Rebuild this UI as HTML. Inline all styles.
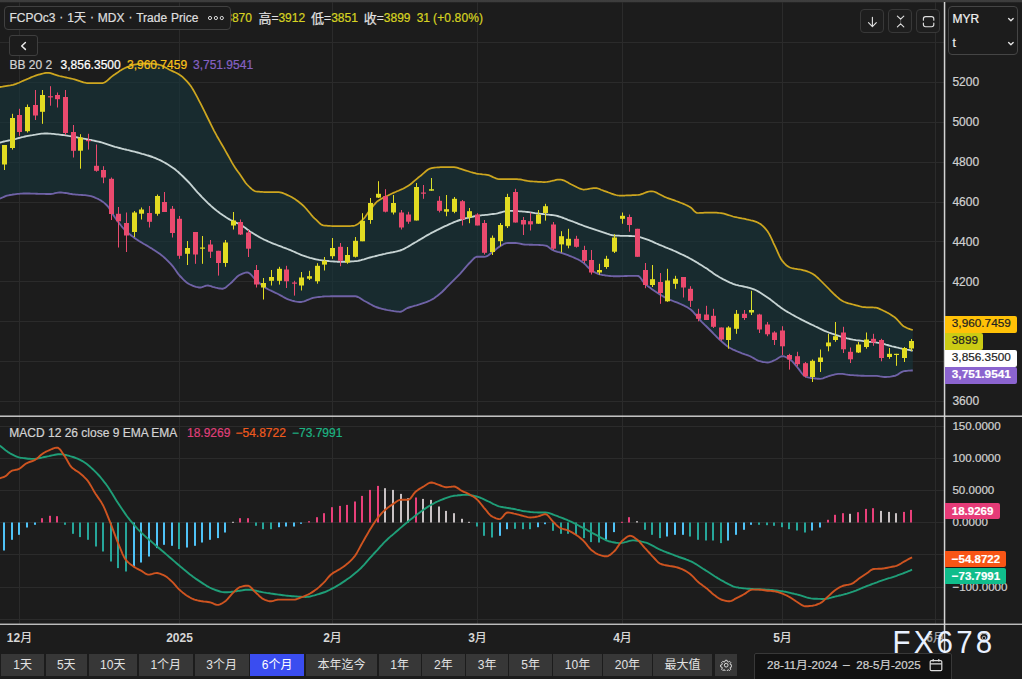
<!DOCTYPE html>
<html><head><meta charset="utf-8"><title>FCPOc3</title>
<style>
html,body{margin:0;padding:0;background:#1c1c1c;}
body{width:1022px;height:679px;position:relative;overflow:hidden;font-family:"Liberation Sans","Noto Sans CJK SC",sans-serif;font-size:12px;color:#d6d6d6;}
.t{-webkit-text-stroke:0.22px currentColor;position:absolute;white-space:nowrap;line-height:20px;height:20px;}
.b{font-weight:bold}
.box{position:absolute;box-sizing:border-box;border:1px solid #414141;border-radius:4px;background:#1c1c1c;}
.lab{-webkit-text-stroke:0.2px currentColor;position:absolute;left:945px;height:16.5px;line-height:16.5px;box-sizing:border-box;padding-left:6.8px;border-radius:0 2px 2px 0;white-space:nowrap;font-size:12px;}
.btn{position:absolute;top:653.6px;height:22.2px;line-height:22px;background:#373737;color:#e2e2e2;text-align:center;font-size:12px;white-space:nowrap;}
</style></head><body>
<div style="position:absolute;left:0;top:0;width:1022px;height:3px;background:linear-gradient(#3e3e3e 0,#3d3d3d 52%,#272727 78%,#1c1c1c 100%)"></div>

<svg width="1022" height="679" viewBox="0 0 1022 679" style="position:absolute;left:0;top:0">
<rect x="0" y="42" width="944" height="1" fill="#2b2b2b"/>
<rect x="0" y="82" width="944" height="1" fill="#2b2b2b"/>
<rect x="0" y="122" width="944" height="1" fill="#2b2b2b"/>
<rect x="0" y="162" width="944" height="1" fill="#2b2b2b"/>
<rect x="0" y="202" width="944" height="1" fill="#2b2b2b"/>
<rect x="0" y="241" width="944" height="1" fill="#2b2b2b"/>
<rect x="0" y="281" width="944" height="1" fill="#2b2b2b"/>
<rect x="0" y="321" width="944" height="1" fill="#2b2b2b"/>
<rect x="0" y="361" width="944" height="1" fill="#2b2b2b"/>
<rect x="0" y="401" width="944" height="1" fill="#2b2b2b"/>
<rect x="0" y="426" width="944" height="1" fill="#2b2b2b"/>
<rect x="0" y="458" width="944" height="1" fill="#2b2b2b"/>
<rect x="0" y="490" width="944" height="1" fill="#2b2b2b"/>
<rect x="0" y="522" width="944" height="1" fill="#2b2b2b"/>
<rect x="0" y="554" width="944" height="1" fill="#2b2b2b"/>
<rect x="0" y="587" width="944" height="1" fill="#2b2b2b"/>
<rect x="0" y="619" width="944" height="1" fill="#2b2b2b"/>
<rect x="19" y="2" width="1" height="622" fill="#2b2b2b"/>
<rect x="179" y="2" width="1" height="622" fill="#2b2b2b"/>
<rect x="332" y="2" width="1" height="622" fill="#2b2b2b"/>
<rect x="477" y="2" width="1" height="622" fill="#2b2b2b"/>
<rect x="622" y="2" width="1" height="622" fill="#2b2b2b"/>
<rect x="782" y="2" width="1" height="622" fill="#2b2b2b"/>
<rect x="935" y="2" width="1" height="622" fill="#2b2b2b"/>
<path d="M-2.0,87.5 L-0.5,87.1 L1.0,86.8 L2.5,86.6 L4.0,86.3 L5.5,86.1 L7.0,85.9 L8.5,85.7 L10.0,85.5 L11.5,85.2 L13.0,84.9 L14.5,84.4 L16.0,83.9 L17.5,83.3 L19.0,82.7 L20.5,82.0 L22.0,81.3 L23.5,80.6 L25.0,80.0 L26.5,79.4 L28.0,78.7 L29.5,78.1 L31.0,77.4 L32.5,76.8 L34.0,76.2 L35.5,75.6 L37.0,75.1 L38.5,74.7 L40.0,74.3 L41.5,73.9 L43.0,73.5 L44.5,73.2 L46.0,72.9 L47.5,72.8 L49.0,72.9 L50.5,73.1 L52.0,73.6 L53.5,74.1 L55.0,74.7 L56.5,75.2 L58.0,75.6 L59.5,76.0 L61.0,76.3 L62.5,76.7 L64.0,77.0 L65.5,77.3 L67.0,77.7 L68.5,78.0 L70.0,78.3 L71.5,78.7 L73.0,79.0 L74.5,79.4 L76.0,79.8 L77.5,80.3 L79.0,80.8 L80.5,81.4 L82.0,81.9 L83.5,82.4 L85.0,82.7 L86.5,83.0 L88.0,83.0 L89.5,83.0 L91.0,83.0 L92.5,83.0 L94.0,83.0 L95.5,83.0 L97.0,83.0 L98.5,83.0 L100.0,83.0 L101.5,83.0 L103.0,83.0 L104.5,82.5 L106.0,81.6 L107.5,80.3 L109.0,79.0 L110.5,77.6 L112.0,76.4 L113.5,75.3 L115.0,74.3 L116.5,73.2 L118.0,72.2 L119.5,71.1 L121.0,70.2 L122.5,69.3 L124.0,68.5 L125.5,67.8 L127.0,67.1 L128.5,66.5 L130.0,65.9 L131.5,65.4 L133.0,64.9 L134.5,64.6 L136.0,64.3 L137.5,64.1 L139.0,63.9 L140.5,63.7 L142.0,63.6 L143.5,63.4 L145.0,63.3 L146.5,63.3 L148.0,63.3 L149.5,63.4 L151.0,63.5 L152.5,63.7 L154.0,63.9 L155.5,64.1 L157.0,64.4 L158.5,64.7 L160.0,65.0 L161.5,65.4 L163.0,66.1 L164.5,66.9 L166.0,67.7 L167.5,68.6 L169.0,69.5 L170.5,70.2 L172.0,70.9 L173.5,71.6 L175.0,72.3 L176.5,73.0 L178.0,73.8 L179.5,74.7 L181.0,75.7 L182.5,76.9 L184.0,78.3 L185.5,79.8 L187.0,81.4 L188.5,83.1 L190.0,85.0 L191.5,87.1 L193.0,89.5 L194.5,92.1 L196.0,94.9 L197.5,97.7 L199.0,100.6 L200.5,103.4 L202.0,106.4 L203.5,109.4 L205.0,112.4 L206.5,115.5 L208.0,118.5 L209.5,121.5 L211.0,124.6 L212.5,127.6 L214.0,130.6 L215.5,133.4 L217.0,136.2 L218.5,138.8 L220.0,141.4 L221.5,144.0 L223.0,146.5 L224.5,149.1 L226.0,151.8 L227.5,154.5 L229.0,157.2 L230.5,159.9 L232.0,162.6 L233.5,165.1 L235.0,167.5 L236.5,169.7 L238.0,171.8 L239.5,173.8 L241.0,175.9 L242.5,178.2 L244.0,180.5 L245.5,182.7 L247.0,184.5 L248.5,186.0 L250.0,187.5 L251.5,188.9 L253.0,190.1 L254.5,191.0 L256.0,191.5 L257.5,191.6 L259.0,191.7 L260.5,191.8 L262.0,191.9 L263.5,192.0 L265.0,192.0 L266.5,192.0 L268.0,192.0 L269.5,192.0 L271.0,192.0 L272.5,192.0 L274.0,192.0 L275.5,192.0 L277.0,192.0 L278.5,192.0 L280.0,192.3 L281.5,192.6 L283.0,193.1 L284.5,193.7 L286.0,194.4 L287.5,195.1 L289.0,195.8 L290.5,196.5 L292.0,197.3 L293.5,198.2 L295.0,199.1 L296.5,200.2 L298.0,201.3 L299.5,202.5 L301.0,203.7 L302.5,205.0 L304.0,206.4 L305.5,208.0 L307.0,209.7 L308.5,211.5 L310.0,213.3 L311.5,215.1 L313.0,216.8 L314.5,218.3 L316.0,219.7 L317.5,221.2 L319.0,222.7 L320.5,224.0 L322.0,224.9 L323.5,225.5 L325.0,225.6 L326.5,225.7 L328.0,225.8 L329.5,225.9 L331.0,226.0 L332.5,226.1 L334.0,226.2 L335.5,226.2 L337.0,226.2 L338.5,226.2 L340.0,226.2 L341.5,226.2 L343.0,226.2 L344.5,226.2 L346.0,226.2 L347.5,226.1 L349.0,226.0 L350.5,226.0 L352.0,225.9 L353.5,225.8 L355.0,225.5 L356.5,224.8 L358.0,223.9 L359.5,222.7 L361.0,221.3 L362.5,220.0 L364.0,218.4 L365.5,216.4 L367.0,214.2 L368.5,212.0 L370.0,210.0 L371.5,208.1 L373.0,206.1 L374.5,204.3 L376.0,202.6 L377.5,201.2 L379.0,200.2 L380.5,199.2 L382.0,198.4 L383.5,197.6 L385.0,196.9 L386.5,196.2 L388.0,195.5 L389.5,194.7 L391.0,194.0 L392.5,193.3 L394.0,192.6 L395.5,192.0 L397.0,191.3 L398.5,190.7 L400.0,190.0 L401.5,189.4 L403.0,188.7 L404.5,187.9 L406.0,187.1 L407.5,186.2 L409.0,185.3 L410.5,184.2 L412.0,183.0 L413.5,181.7 L415.0,180.4 L416.5,179.1 L418.0,177.8 L419.5,176.6 L421.0,175.5 L422.5,174.2 L424.0,172.8 L425.5,171.5 L427.0,170.3 L428.5,169.3 L430.0,168.6 L431.5,168.2 L433.0,167.9 L434.5,167.7 L436.0,167.5 L437.5,167.4 L439.0,167.3 L440.5,167.2 L442.0,167.2 L443.5,167.1 L445.0,167.1 L446.5,167.1 L448.0,167.0 L449.5,167.0 L451.0,167.0 L452.5,167.0 L454.0,167.1 L455.5,167.3 L457.0,167.7 L458.5,168.1 L460.0,168.7 L461.5,169.2 L463.0,169.7 L464.5,170.2 L466.0,170.6 L467.5,171.0 L469.0,171.5 L470.5,172.0 L472.0,172.4 L473.5,172.8 L475.0,173.2 L476.5,173.6 L478.0,173.8 L479.5,174.0 L481.0,174.2 L482.5,174.4 L484.0,174.5 L485.5,174.7 L487.0,174.9 L488.5,175.2 L490.0,175.7 L491.5,176.4 L493.0,177.1 L494.5,177.7 L496.0,178.4 L497.5,178.9 L499.0,179.2 L500.5,179.2 L502.0,179.2 L503.5,179.2 L505.0,179.2 L506.5,179.2 L508.0,179.2 L509.5,179.2 L511.0,179.2 L512.5,179.2 L514.0,179.2 L515.5,179.2 L517.0,179.2 L518.5,179.3 L520.0,179.4 L521.5,179.7 L523.0,180.0 L524.5,180.3 L526.0,180.6 L527.5,180.9 L529.0,181.1 L530.5,181.3 L532.0,181.4 L533.5,181.5 L535.0,181.6 L536.5,181.7 L538.0,181.8 L539.5,181.9 L541.0,181.9 L542.5,182.0 L544.0,182.0 L545.5,182.0 L547.0,181.9 L548.5,181.7 L550.0,181.4 L551.5,181.0 L553.0,180.6 L554.5,180.3 L556.0,179.9 L557.5,179.7 L559.0,179.5 L560.5,179.5 L562.0,179.8 L563.5,180.3 L565.0,180.9 L566.5,181.7 L568.0,182.6 L569.5,183.5 L571.0,184.3 L572.5,185.0 L574.0,185.7 L575.5,186.5 L577.0,187.3 L578.5,188.0 L580.0,188.7 L581.5,189.2 L583.0,189.5 L584.5,189.5 L586.0,189.3 L587.5,189.1 L589.0,188.8 L590.5,188.5 L592.0,188.3 L593.5,188.1 L595.0,188.0 L596.5,188.1 L598.0,188.5 L599.5,189.0 L601.0,189.7 L602.5,190.3 L604.0,190.9 L605.5,191.4 L607.0,191.9 L608.5,192.5 L610.0,193.0 L611.5,193.6 L613.0,194.1 L614.5,194.6 L616.0,195.0 L617.5,195.3 L619.0,195.5 L620.5,195.5 L622.0,195.5 L623.5,195.5 L625.0,195.5 L626.5,195.4 L628.0,195.4 L629.5,195.3 L631.0,195.3 L632.5,195.2 L634.0,195.2 L635.5,195.1 L637.0,195.0 L638.5,194.9 L640.0,194.6 L641.5,194.1 L643.0,193.6 L644.5,193.0 L646.0,192.4 L647.5,191.9 L649.0,191.5 L650.5,191.3 L652.0,191.3 L653.5,191.5 L655.0,192.0 L656.5,192.6 L658.0,193.4 L659.5,194.2 L661.0,195.0 L662.5,195.8 L664.0,196.6 L665.5,197.2 L667.0,197.8 L668.5,198.3 L670.0,198.8 L671.5,199.4 L673.0,199.9 L674.5,200.4 L676.0,201.0 L677.5,201.5 L679.0,202.1 L680.5,202.7 L682.0,203.3 L683.5,203.9 L685.0,204.5 L686.5,205.2 L688.0,205.9 L689.5,206.7 L691.0,207.7 L692.5,209.2 L694.0,210.8 L695.5,212.2 L697.0,212.9 L698.5,213.0 L700.0,212.9 L701.5,212.9 L703.0,212.8 L704.5,212.7 L706.0,212.6 L707.5,212.6 L709.0,212.5 L710.5,212.5 L712.0,212.5 L713.5,212.6 L715.0,212.6 L716.5,212.7 L718.0,212.8 L719.5,213.0 L721.0,213.1 L722.5,213.4 L724.0,213.7 L725.5,214.1 L727.0,214.6 L728.5,215.1 L730.0,215.5 L731.5,216.0 L733.0,216.5 L734.5,216.9 L736.0,217.2 L737.5,217.5 L739.0,217.8 L740.5,218.1 L742.0,218.4 L743.5,218.6 L745.0,218.9 L746.5,219.3 L748.0,219.6 L749.5,220.0 L751.0,220.4 L752.5,220.7 L754.0,221.2 L755.5,221.7 L757.0,222.2 L758.5,222.9 L760.0,223.7 L761.5,224.8 L763.0,226.1 L764.5,227.7 L766.0,229.4 L767.5,231.2 L769.0,233.6 L770.5,236.5 L772.0,239.7 L773.5,243.1 L775.0,246.2 L776.5,249.4 L778.0,252.8 L779.5,256.1 L781.0,259.0 L782.5,261.2 L784.0,262.9 L785.5,264.5 L787.0,265.8 L788.5,266.8 L790.0,267.5 L791.5,268.0 L793.0,268.3 L794.5,268.6 L796.0,268.8 L797.5,269.1 L799.0,269.3 L800.5,269.5 L802.0,269.9 L803.5,270.3 L805.0,270.7 L806.5,271.2 L808.0,271.7 L809.5,272.3 L811.0,273.0 L812.5,273.8 L814.0,274.7 L815.5,275.8 L817.0,277.1 L818.5,278.5 L820.0,280.0 L821.5,281.5 L823.0,283.0 L824.5,284.5 L826.0,286.0 L827.5,287.5 L829.0,289.0 L830.5,290.6 L832.0,292.1 L833.5,293.6 L835.0,295.0 L836.5,296.4 L838.0,297.7 L839.5,299.0 L841.0,300.1 L842.5,301.0 L844.0,301.7 L845.5,302.3 L847.0,302.8 L848.5,303.3 L850.0,303.7 L851.5,304.1 L853.0,304.5 L854.5,304.9 L856.0,305.3 L857.5,305.7 L859.0,306.1 L860.5,306.5 L862.0,306.9 L863.5,307.1 L865.0,307.2 L866.5,307.3 L868.0,307.3 L869.5,307.4 L871.0,307.4 L872.5,307.4 L874.0,307.5 L875.5,307.5 L877.0,307.9 L878.5,308.4 L880.0,309.1 L881.5,309.8 L883.0,310.5 L884.5,311.2 L886.0,311.9 L887.5,312.7 L889.0,313.6 L890.5,314.4 L892.0,315.4 L893.5,316.4 L895.0,317.5 L896.5,318.8 L898.0,320.5 L899.5,322.2 L901.0,323.9 L902.5,325.4 L904.0,326.4 L905.5,327.2 L907.0,328.0 L908.5,328.7 L910.0,329.2 L911.5,329.6 L912.8,329.8 L912.8,370.5 L911.5,370.5 L910.0,370.6 L908.5,370.7 L907.0,370.8 L905.5,371.0 L904.0,371.2 L902.5,371.6 L901.0,372.4 L899.5,373.3 L898.0,374.4 L896.5,375.2 L895.0,375.8 L893.5,376.0 L892.0,376.3 L890.5,376.6 L889.0,376.8 L887.5,376.9 L886.0,377.0 L884.5,377.0 L883.0,376.9 L881.5,376.6 L880.0,376.4 L878.5,376.1 L877.0,375.9 L875.5,375.8 L874.0,375.8 L872.5,375.8 L871.0,375.8 L869.5,375.8 L868.0,375.8 L866.5,375.8 L865.0,375.8 L863.5,375.7 L862.0,375.7 L860.5,375.7 L859.0,375.6 L857.5,375.5 L856.0,375.4 L854.5,375.3 L853.0,375.2 L851.5,375.1 L850.0,375.0 L848.5,374.8 L847.0,374.6 L845.5,374.4 L844.0,374.1 L842.5,373.9 L841.0,373.8 L839.5,373.8 L838.0,373.9 L836.5,374.1 L835.0,374.4 L833.5,374.8 L832.0,375.2 L830.5,375.6 L829.0,376.0 L827.5,376.6 L826.0,377.2 L824.5,377.7 L823.0,378.3 L821.5,378.6 L820.0,378.8 L818.5,378.7 L817.0,378.7 L815.5,378.5 L814.0,378.4 L812.5,378.2 L811.0,378.0 L809.5,377.7 L808.0,377.3 L806.5,376.8 L805.0,376.2 L803.5,375.2 L802.0,373.5 L800.5,371.5 L799.0,369.4 L797.5,367.5 L796.0,365.7 L794.5,363.9 L793.0,362.2 L791.5,360.7 L790.0,359.5 L788.5,358.6 L787.0,357.7 L785.5,357.0 L784.0,356.4 L782.5,356.2 L781.0,356.5 L779.5,357.3 L778.0,358.2 L776.5,359.2 L775.0,360.0 L773.5,360.6 L772.0,361.3 L770.5,361.9 L769.0,362.3 L767.5,362.5 L766.0,362.4 L764.5,362.2 L763.0,362.0 L761.5,361.6 L760.0,361.2 L758.5,360.8 L757.0,360.1 L755.5,359.3 L754.0,358.4 L752.5,357.5 L751.0,356.7 L749.5,356.0 L748.0,355.4 L746.5,354.9 L745.0,354.4 L743.5,353.8 L742.0,353.3 L740.5,352.7 L739.0,352.1 L737.5,351.5 L736.0,350.9 L734.5,350.2 L733.0,349.6 L731.5,348.8 L730.0,348.0 L728.5,347.1 L727.0,346.0 L725.5,344.8 L724.0,343.5 L722.5,342.2 L721.0,340.9 L719.5,339.6 L718.0,338.1 L716.5,336.7 L715.0,335.1 L713.5,333.6 L712.0,332.0 L710.5,330.5 L709.0,329.0 L707.5,327.5 L706.0,326.0 L704.5,324.6 L703.0,323.1 L701.5,321.6 L700.0,320.0 L698.5,318.3 L697.0,316.5 L695.5,314.7 L694.0,312.9 L692.5,311.2 L691.0,309.8 L689.5,308.7 L688.0,307.7 L686.5,306.8 L685.0,306.1 L683.5,305.3 L682.0,304.7 L680.5,304.0 L679.0,303.3 L677.5,302.7 L676.0,302.1 L674.5,301.6 L673.0,301.0 L671.5,300.4 L670.0,299.9 L668.5,299.2 L667.0,298.5 L665.5,297.7 L664.0,296.9 L662.5,296.0 L661.0,295.1 L659.5,294.2 L658.0,293.2 L656.5,292.2 L655.0,291.2 L653.5,290.2 L652.0,289.2 L650.5,288.1 L649.0,287.0 L647.5,285.9 L646.0,284.6 L644.5,283.3 L643.0,281.4 L641.5,279.3 L640.0,277.3 L638.5,276.0 L637.0,275.8 L635.5,275.8 L634.0,275.8 L632.5,275.8 L631.0,275.9 L629.5,275.9 L628.0,275.9 L626.5,276.0 L625.0,276.0 L623.5,276.1 L622.0,276.1 L620.5,276.2 L619.0,276.2 L617.5,276.2 L616.0,276.2 L614.5,276.2 L613.0,276.2 L611.5,276.1 L610.0,276.0 L608.5,275.9 L607.0,275.7 L605.5,275.5 L604.0,275.2 L602.5,275.0 L601.0,274.7 L599.5,274.4 L598.0,273.9 L596.5,273.2 L595.0,272.4 L593.5,271.4 L592.0,270.4 L590.5,269.4 L589.0,268.2 L587.5,266.8 L586.0,265.2 L584.5,263.7 L583.0,262.4 L581.5,261.4 L580.0,260.5 L578.5,259.7 L577.0,259.0 L575.5,258.3 L574.0,257.6 L572.5,257.0 L571.0,256.4 L569.5,255.8 L568.0,255.2 L566.5,254.7 L565.0,254.1 L563.5,253.6 L562.0,253.1 L560.5,252.6 L559.0,252.2 L557.5,251.8 L556.0,251.3 L554.5,250.8 L553.0,250.2 L551.5,249.4 L550.0,248.2 L548.5,247.0 L547.0,246.0 L545.5,245.6 L544.0,245.4 L542.5,245.2 L541.0,245.1 L539.5,245.0 L538.0,244.9 L536.5,244.9 L535.0,244.8 L533.5,244.8 L532.0,244.7 L530.5,244.7 L529.0,244.7 L527.5,244.6 L526.0,244.6 L524.5,244.5 L523.0,244.3 L521.5,244.0 L520.0,243.7 L518.5,243.4 L517.0,243.1 L515.5,243.0 L514.0,243.0 L512.5,243.0 L511.0,243.0 L509.5,243.0 L508.0,243.0 L506.5,243.1 L505.0,243.5 L503.5,244.2 L502.0,245.1 L500.5,246.0 L499.0,246.9 L497.5,248.0 L496.0,249.2 L494.5,250.5 L493.0,251.6 L491.5,252.8 L490.0,254.0 L488.5,255.2 L487.0,256.2 L485.5,256.7 L484.0,256.8 L482.5,256.8 L481.0,256.8 L479.5,256.8 L478.0,256.8 L476.5,256.8 L475.0,257.5 L473.5,258.8 L472.0,260.4 L470.5,262.0 L469.0,263.5 L467.5,265.1 L466.0,266.8 L464.5,268.6 L463.0,270.4 L461.5,272.1 L460.0,273.8 L458.5,275.3 L457.0,276.8 L455.5,278.3 L454.0,279.8 L452.5,281.3 L451.0,282.8 L449.5,284.3 L448.0,285.8 L446.5,287.4 L445.0,289.0 L443.5,290.5 L442.0,292.0 L440.5,293.3 L439.0,294.5 L437.5,295.7 L436.0,296.8 L434.5,297.9 L433.0,298.9 L431.5,299.7 L430.0,300.5 L428.5,301.2 L427.0,301.8 L425.5,302.4 L424.0,302.9 L422.5,303.4 L421.0,303.9 L419.5,304.4 L418.0,304.8 L416.5,305.3 L415.0,305.7 L413.5,306.2 L412.0,306.6 L410.5,307.0 L409.0,307.5 L407.5,308.0 L406.0,308.8 L404.5,309.7 L403.0,310.7 L401.5,311.5 L400.0,311.8 L398.5,311.7 L397.0,311.6 L395.5,311.4 L394.0,311.2 L392.5,310.9 L391.0,310.7 L389.5,310.4 L388.0,310.2 L386.5,309.9 L385.0,309.5 L383.5,309.2 L382.0,308.8 L380.5,308.4 L379.0,308.0 L377.5,307.5 L376.0,307.0 L374.5,306.3 L373.0,305.6 L371.5,304.8 L370.0,304.0 L368.5,303.1 L367.0,302.3 L365.5,301.5 L364.0,300.7 L362.5,299.8 L361.0,298.8 L359.5,297.8 L358.0,297.0 L356.5,296.5 L355.0,296.2 L353.5,296.2 L352.0,296.2 L350.5,296.2 L349.0,296.2 L347.5,296.2 L346.0,296.2 L344.5,296.2 L343.0,296.2 L341.5,296.2 L340.0,296.2 L338.5,296.2 L337.0,296.2 L335.5,296.2 L334.0,296.2 L332.5,296.2 L331.0,296.2 L329.5,296.3 L328.0,296.3 L326.5,296.3 L325.0,296.4 L323.5,296.5 L322.0,296.7 L320.5,296.8 L319.0,297.0 L317.5,297.2 L316.0,297.4 L314.5,297.6 L313.0,297.9 L311.5,298.4 L310.0,299.0 L308.5,299.6 L307.0,300.2 L305.5,300.8 L304.0,301.3 L302.5,301.7 L301.0,302.0 L299.5,302.0 L298.0,301.9 L296.5,301.7 L295.0,301.4 L293.5,301.0 L292.0,300.6 L290.5,300.1 L289.0,299.7 L287.5,299.1 L286.0,298.4 L284.5,297.6 L283.0,296.8 L281.5,295.9 L280.0,295.1 L278.5,294.3 L277.0,293.5 L275.5,292.8 L274.0,292.1 L272.5,291.4 L271.0,290.7 L269.5,290.0 L268.0,289.2 L266.5,288.4 L265.0,287.5 L263.5,286.5 L262.0,285.3 L260.5,284.0 L259.0,282.6 L257.5,281.2 L256.0,279.9 L254.5,278.5 L253.0,276.9 L251.5,275.2 L250.0,273.7 L248.5,272.7 L247.0,272.5 L245.5,272.7 L244.0,273.1 L242.5,273.7 L241.0,274.3 L239.5,275.0 L238.0,276.0 L236.5,277.3 L235.0,278.8 L233.5,280.4 L232.0,282.0 L230.5,283.4 L229.0,284.6 L227.5,285.9 L226.0,287.2 L224.5,288.2 L223.0,288.7 L221.5,288.7 L220.0,288.5 L218.5,288.3 L217.0,287.9 L215.5,287.6 L214.0,287.2 L212.5,286.8 L211.0,286.2 L209.5,285.8 L208.0,285.5 L206.5,285.6 L205.0,286.0 L203.5,286.6 L202.0,287.1 L200.5,287.5 L199.0,287.5 L197.5,287.2 L196.0,286.9 L194.5,286.4 L193.0,285.8 L191.5,285.2 L190.0,284.5 L188.5,283.7 L187.0,282.7 L185.5,281.5 L184.0,280.1 L182.5,278.6 L181.0,277.0 L179.5,275.5 L178.0,273.6 L176.5,271.5 L175.0,269.3 L173.5,267.2 L172.0,265.4 L170.5,263.7 L169.0,262.1 L167.5,260.6 L166.0,259.1 L164.5,257.7 L163.0,256.4 L161.5,255.2 L160.0,254.1 L158.5,253.0 L157.0,252.0 L155.5,251.0 L154.0,250.0 L152.5,249.1 L151.0,248.1 L149.5,247.2 L148.0,246.3 L146.5,245.4 L145.0,244.5 L143.5,243.7 L142.0,242.8 L140.5,241.9 L139.0,241.0 L137.5,240.0 L136.0,239.0 L134.5,237.9 L133.0,236.8 L131.5,235.7 L130.0,234.5 L128.5,233.2 L127.0,231.9 L125.5,230.5 L124.0,229.0 L122.5,227.3 L121.0,225.5 L119.5,223.6 L118.0,221.6 L116.5,219.6 L115.0,217.5 L113.5,215.2 L112.0,212.7 L110.5,210.2 L109.0,207.9 L107.5,206.0 L106.0,204.5 L104.5,203.1 L103.0,201.9 L101.5,200.9 L100.0,200.0 L98.5,199.2 L97.0,198.5 L95.5,197.9 L94.0,197.2 L92.5,196.7 L91.0,196.2 L89.5,195.9 L88.0,195.6 L86.5,195.4 L85.0,195.2 L83.5,195.1 L82.0,195.0 L80.5,194.9 L79.0,194.8 L77.5,194.7 L76.0,194.6 L74.5,194.4 L73.0,194.3 L71.5,194.0 L70.0,193.8 L68.5,193.5 L67.0,193.2 L65.5,193.0 L64.0,192.8 L62.5,192.6 L61.0,192.5 L59.5,192.5 L58.0,192.7 L56.5,192.9 L55.0,193.2 L53.5,193.6 L52.0,193.8 L50.5,194.0 L49.0,194.0 L47.5,194.0 L46.0,194.0 L44.5,193.9 L43.0,193.9 L41.5,193.9 L40.0,193.8 L38.5,193.8 L37.0,193.7 L35.5,193.7 L34.0,193.6 L32.5,193.6 L31.0,193.6 L29.5,193.5 L28.0,193.5 L26.5,193.5 L25.0,193.5 L23.5,193.5 L22.0,193.6 L20.5,193.7 L19.0,193.8 L17.5,193.9 L16.0,194.1 L14.5,194.3 L13.0,194.5 L11.5,194.8 L10.0,195.0 L8.5,195.3 L7.0,195.6 L5.5,196.1 L4.0,196.8 L2.5,197.5 L1.0,198.2 L-0.5,198.6 L-2.0,199.0Z" fill="#17353c" fill-opacity="0.62"/>
<path d="M-2.0,87.5 L-0.5,87.1 L1.0,86.8 L2.5,86.6 L4.0,86.3 L5.5,86.1 L7.0,85.9 L8.5,85.7 L10.0,85.5 L11.5,85.2 L13.0,84.9 L14.5,84.4 L16.0,83.9 L17.5,83.3 L19.0,82.7 L20.5,82.0 L22.0,81.3 L23.5,80.6 L25.0,80.0 L26.5,79.4 L28.0,78.7 L29.5,78.1 L31.0,77.4 L32.5,76.8 L34.0,76.2 L35.5,75.6 L37.0,75.1 L38.5,74.7 L40.0,74.3 L41.5,73.9 L43.0,73.5 L44.5,73.2 L46.0,72.9 L47.5,72.8 L49.0,72.9 L50.5,73.1 L52.0,73.6 L53.5,74.1 L55.0,74.7 L56.5,75.2 L58.0,75.6 L59.5,76.0 L61.0,76.3 L62.5,76.7 L64.0,77.0 L65.5,77.3 L67.0,77.7 L68.5,78.0 L70.0,78.3 L71.5,78.7 L73.0,79.0 L74.5,79.4 L76.0,79.8 L77.5,80.3 L79.0,80.8 L80.5,81.4 L82.0,81.9 L83.5,82.4 L85.0,82.7 L86.5,83.0 L88.0,83.0 L89.5,83.0 L91.0,83.0 L92.5,83.0 L94.0,83.0 L95.5,83.0 L97.0,83.0 L98.5,83.0 L100.0,83.0 L101.5,83.0 L103.0,83.0 L104.5,82.5 L106.0,81.6 L107.5,80.3 L109.0,79.0 L110.5,77.6 L112.0,76.4 L113.5,75.3 L115.0,74.3 L116.5,73.2 L118.0,72.2 L119.5,71.1 L121.0,70.2 L122.5,69.3 L124.0,68.5 L125.5,67.8 L127.0,67.1 L128.5,66.5 L130.0,65.9 L131.5,65.4 L133.0,64.9 L134.5,64.6 L136.0,64.3 L137.5,64.1 L139.0,63.9 L140.5,63.7 L142.0,63.6 L143.5,63.4 L145.0,63.3 L146.5,63.3 L148.0,63.3 L149.5,63.4 L151.0,63.5 L152.5,63.7 L154.0,63.9 L155.5,64.1 L157.0,64.4 L158.5,64.7 L160.0,65.0 L161.5,65.4 L163.0,66.1 L164.5,66.9 L166.0,67.7 L167.5,68.6 L169.0,69.5 L170.5,70.2 L172.0,70.9 L173.5,71.6 L175.0,72.3 L176.5,73.0 L178.0,73.8 L179.5,74.7 L181.0,75.7 L182.5,76.9 L184.0,78.3 L185.5,79.8 L187.0,81.4 L188.5,83.1 L190.0,85.0 L191.5,87.1 L193.0,89.5 L194.5,92.1 L196.0,94.9 L197.5,97.7 L199.0,100.6 L200.5,103.4 L202.0,106.4 L203.5,109.4 L205.0,112.4 L206.5,115.5 L208.0,118.5 L209.5,121.5 L211.0,124.6 L212.5,127.6 L214.0,130.6 L215.5,133.4 L217.0,136.2 L218.5,138.8 L220.0,141.4 L221.5,144.0 L223.0,146.5 L224.5,149.1 L226.0,151.8 L227.5,154.5 L229.0,157.2 L230.5,159.9 L232.0,162.6 L233.5,165.1 L235.0,167.5 L236.5,169.7 L238.0,171.8 L239.5,173.8 L241.0,175.9 L242.5,178.2 L244.0,180.5 L245.5,182.7 L247.0,184.5 L248.5,186.0 L250.0,187.5 L251.5,188.9 L253.0,190.1 L254.5,191.0 L256.0,191.5 L257.5,191.6 L259.0,191.7 L260.5,191.8 L262.0,191.9 L263.5,192.0 L265.0,192.0 L266.5,192.0 L268.0,192.0 L269.5,192.0 L271.0,192.0 L272.5,192.0 L274.0,192.0 L275.5,192.0 L277.0,192.0 L278.5,192.0 L280.0,192.3 L281.5,192.6 L283.0,193.1 L284.5,193.7 L286.0,194.4 L287.5,195.1 L289.0,195.8 L290.5,196.5 L292.0,197.3 L293.5,198.2 L295.0,199.1 L296.5,200.2 L298.0,201.3 L299.5,202.5 L301.0,203.7 L302.5,205.0 L304.0,206.4 L305.5,208.0 L307.0,209.7 L308.5,211.5 L310.0,213.3 L311.5,215.1 L313.0,216.8 L314.5,218.3 L316.0,219.7 L317.5,221.2 L319.0,222.7 L320.5,224.0 L322.0,224.9 L323.5,225.5 L325.0,225.6 L326.5,225.7 L328.0,225.8 L329.5,225.9 L331.0,226.0 L332.5,226.1 L334.0,226.2 L335.5,226.2 L337.0,226.2 L338.5,226.2 L340.0,226.2 L341.5,226.2 L343.0,226.2 L344.5,226.2 L346.0,226.2 L347.5,226.1 L349.0,226.0 L350.5,226.0 L352.0,225.9 L353.5,225.8 L355.0,225.5 L356.5,224.8 L358.0,223.9 L359.5,222.7 L361.0,221.3 L362.5,220.0 L364.0,218.4 L365.5,216.4 L367.0,214.2 L368.5,212.0 L370.0,210.0 L371.5,208.1 L373.0,206.1 L374.5,204.3 L376.0,202.6 L377.5,201.2 L379.0,200.2 L380.5,199.2 L382.0,198.4 L383.5,197.6 L385.0,196.9 L386.5,196.2 L388.0,195.5 L389.5,194.7 L391.0,194.0 L392.5,193.3 L394.0,192.6 L395.5,192.0 L397.0,191.3 L398.5,190.7 L400.0,190.0 L401.5,189.4 L403.0,188.7 L404.5,187.9 L406.0,187.1 L407.5,186.2 L409.0,185.3 L410.5,184.2 L412.0,183.0 L413.5,181.7 L415.0,180.4 L416.5,179.1 L418.0,177.8 L419.5,176.6 L421.0,175.5 L422.5,174.2 L424.0,172.8 L425.5,171.5 L427.0,170.3 L428.5,169.3 L430.0,168.6 L431.5,168.2 L433.0,167.9 L434.5,167.7 L436.0,167.5 L437.5,167.4 L439.0,167.3 L440.5,167.2 L442.0,167.2 L443.5,167.1 L445.0,167.1 L446.5,167.1 L448.0,167.0 L449.5,167.0 L451.0,167.0 L452.5,167.0 L454.0,167.1 L455.5,167.3 L457.0,167.7 L458.5,168.1 L460.0,168.7 L461.5,169.2 L463.0,169.7 L464.5,170.2 L466.0,170.6 L467.5,171.0 L469.0,171.5 L470.5,172.0 L472.0,172.4 L473.5,172.8 L475.0,173.2 L476.5,173.6 L478.0,173.8 L479.5,174.0 L481.0,174.2 L482.5,174.4 L484.0,174.5 L485.5,174.7 L487.0,174.9 L488.5,175.2 L490.0,175.7 L491.5,176.4 L493.0,177.1 L494.5,177.7 L496.0,178.4 L497.5,178.9 L499.0,179.2 L500.5,179.2 L502.0,179.2 L503.5,179.2 L505.0,179.2 L506.5,179.2 L508.0,179.2 L509.5,179.2 L511.0,179.2 L512.5,179.2 L514.0,179.2 L515.5,179.2 L517.0,179.2 L518.5,179.3 L520.0,179.4 L521.5,179.7 L523.0,180.0 L524.5,180.3 L526.0,180.6 L527.5,180.9 L529.0,181.1 L530.5,181.3 L532.0,181.4 L533.5,181.5 L535.0,181.6 L536.5,181.7 L538.0,181.8 L539.5,181.9 L541.0,181.9 L542.5,182.0 L544.0,182.0 L545.5,182.0 L547.0,181.9 L548.5,181.7 L550.0,181.4 L551.5,181.0 L553.0,180.6 L554.5,180.3 L556.0,179.9 L557.5,179.7 L559.0,179.5 L560.5,179.5 L562.0,179.8 L563.5,180.3 L565.0,180.9 L566.5,181.7 L568.0,182.6 L569.5,183.5 L571.0,184.3 L572.5,185.0 L574.0,185.7 L575.5,186.5 L577.0,187.3 L578.5,188.0 L580.0,188.7 L581.5,189.2 L583.0,189.5 L584.5,189.5 L586.0,189.3 L587.5,189.1 L589.0,188.8 L590.5,188.5 L592.0,188.3 L593.5,188.1 L595.0,188.0 L596.5,188.1 L598.0,188.5 L599.5,189.0 L601.0,189.7 L602.5,190.3 L604.0,190.9 L605.5,191.4 L607.0,191.9 L608.5,192.5 L610.0,193.0 L611.5,193.6 L613.0,194.1 L614.5,194.6 L616.0,195.0 L617.5,195.3 L619.0,195.5 L620.5,195.5 L622.0,195.5 L623.5,195.5 L625.0,195.5 L626.5,195.4 L628.0,195.4 L629.5,195.3 L631.0,195.3 L632.5,195.2 L634.0,195.2 L635.5,195.1 L637.0,195.0 L638.5,194.9 L640.0,194.6 L641.5,194.1 L643.0,193.6 L644.5,193.0 L646.0,192.4 L647.5,191.9 L649.0,191.5 L650.5,191.3 L652.0,191.3 L653.5,191.5 L655.0,192.0 L656.5,192.6 L658.0,193.4 L659.5,194.2 L661.0,195.0 L662.5,195.8 L664.0,196.6 L665.5,197.2 L667.0,197.8 L668.5,198.3 L670.0,198.8 L671.5,199.4 L673.0,199.9 L674.5,200.4 L676.0,201.0 L677.5,201.5 L679.0,202.1 L680.5,202.7 L682.0,203.3 L683.5,203.9 L685.0,204.5 L686.5,205.2 L688.0,205.9 L689.5,206.7 L691.0,207.7 L692.5,209.2 L694.0,210.8 L695.5,212.2 L697.0,212.9 L698.5,213.0 L700.0,212.9 L701.5,212.9 L703.0,212.8 L704.5,212.7 L706.0,212.6 L707.5,212.6 L709.0,212.5 L710.5,212.5 L712.0,212.5 L713.5,212.6 L715.0,212.6 L716.5,212.7 L718.0,212.8 L719.5,213.0 L721.0,213.1 L722.5,213.4 L724.0,213.7 L725.5,214.1 L727.0,214.6 L728.5,215.1 L730.0,215.5 L731.5,216.0 L733.0,216.5 L734.5,216.9 L736.0,217.2 L737.5,217.5 L739.0,217.8 L740.5,218.1 L742.0,218.4 L743.5,218.6 L745.0,218.9 L746.5,219.3 L748.0,219.6 L749.5,220.0 L751.0,220.4 L752.5,220.7 L754.0,221.2 L755.5,221.7 L757.0,222.2 L758.5,222.9 L760.0,223.7 L761.5,224.8 L763.0,226.1 L764.5,227.7 L766.0,229.4 L767.5,231.2 L769.0,233.6 L770.5,236.5 L772.0,239.7 L773.5,243.1 L775.0,246.2 L776.5,249.4 L778.0,252.8 L779.5,256.1 L781.0,259.0 L782.5,261.2 L784.0,262.9 L785.5,264.5 L787.0,265.8 L788.5,266.8 L790.0,267.5 L791.5,268.0 L793.0,268.3 L794.5,268.6 L796.0,268.8 L797.5,269.1 L799.0,269.3 L800.5,269.5 L802.0,269.9 L803.5,270.3 L805.0,270.7 L806.5,271.2 L808.0,271.7 L809.5,272.3 L811.0,273.0 L812.5,273.8 L814.0,274.7 L815.5,275.8 L817.0,277.1 L818.5,278.5 L820.0,280.0 L821.5,281.5 L823.0,283.0 L824.5,284.5 L826.0,286.0 L827.5,287.5 L829.0,289.0 L830.5,290.6 L832.0,292.1 L833.5,293.6 L835.0,295.0 L836.5,296.4 L838.0,297.7 L839.5,299.0 L841.0,300.1 L842.5,301.0 L844.0,301.7 L845.5,302.3 L847.0,302.8 L848.5,303.3 L850.0,303.7 L851.5,304.1 L853.0,304.5 L854.5,304.9 L856.0,305.3 L857.5,305.7 L859.0,306.1 L860.5,306.5 L862.0,306.9 L863.5,307.1 L865.0,307.2 L866.5,307.3 L868.0,307.3 L869.5,307.4 L871.0,307.4 L872.5,307.4 L874.0,307.5 L875.5,307.5 L877.0,307.9 L878.5,308.4 L880.0,309.1 L881.5,309.8 L883.0,310.5 L884.5,311.2 L886.0,311.9 L887.5,312.7 L889.0,313.6 L890.5,314.4 L892.0,315.4 L893.5,316.4 L895.0,317.5 L896.5,318.8 L898.0,320.5 L899.5,322.2 L901.0,323.9 L902.5,325.4 L904.0,326.4 L905.5,327.2 L907.0,328.0 L908.5,328.7 L910.0,329.2 L911.5,329.6 L912.8,329.8" fill="none" stroke="#cda61f" stroke-width="1.75" stroke-linejoin="round"/>
<path d="M-2.0,199.0 L-0.5,198.6 L1.0,198.2 L2.5,197.5 L4.0,196.8 L5.5,196.1 L7.0,195.6 L8.5,195.3 L10.0,195.0 L11.5,194.8 L13.0,194.5 L14.5,194.3 L16.0,194.1 L17.5,193.9 L19.0,193.8 L20.5,193.7 L22.0,193.6 L23.5,193.5 L25.0,193.5 L26.5,193.5 L28.0,193.5 L29.5,193.5 L31.0,193.6 L32.5,193.6 L34.0,193.6 L35.5,193.7 L37.0,193.7 L38.5,193.8 L40.0,193.8 L41.5,193.9 L43.0,193.9 L44.5,193.9 L46.0,194.0 L47.5,194.0 L49.0,194.0 L50.5,194.0 L52.0,193.8 L53.5,193.6 L55.0,193.2 L56.5,192.9 L58.0,192.7 L59.5,192.5 L61.0,192.5 L62.5,192.6 L64.0,192.8 L65.5,193.0 L67.0,193.2 L68.5,193.5 L70.0,193.8 L71.5,194.0 L73.0,194.3 L74.5,194.4 L76.0,194.6 L77.5,194.7 L79.0,194.8 L80.5,194.9 L82.0,195.0 L83.5,195.1 L85.0,195.2 L86.5,195.4 L88.0,195.6 L89.5,195.9 L91.0,196.2 L92.5,196.7 L94.0,197.2 L95.5,197.9 L97.0,198.5 L98.5,199.2 L100.0,200.0 L101.5,200.9 L103.0,201.9 L104.5,203.1 L106.0,204.5 L107.5,206.0 L109.0,207.9 L110.5,210.2 L112.0,212.7 L113.5,215.2 L115.0,217.5 L116.5,219.6 L118.0,221.6 L119.5,223.6 L121.0,225.5 L122.5,227.3 L124.0,229.0 L125.5,230.5 L127.0,231.9 L128.5,233.2 L130.0,234.5 L131.5,235.7 L133.0,236.8 L134.5,237.9 L136.0,239.0 L137.5,240.0 L139.0,241.0 L140.5,241.9 L142.0,242.8 L143.5,243.7 L145.0,244.5 L146.5,245.4 L148.0,246.3 L149.5,247.2 L151.0,248.1 L152.5,249.1 L154.0,250.0 L155.5,251.0 L157.0,252.0 L158.5,253.0 L160.0,254.1 L161.5,255.2 L163.0,256.4 L164.5,257.7 L166.0,259.1 L167.5,260.6 L169.0,262.1 L170.5,263.7 L172.0,265.4 L173.5,267.2 L175.0,269.3 L176.5,271.5 L178.0,273.6 L179.5,275.5 L181.0,277.0 L182.5,278.6 L184.0,280.1 L185.5,281.5 L187.0,282.7 L188.5,283.7 L190.0,284.5 L191.5,285.2 L193.0,285.8 L194.5,286.4 L196.0,286.9 L197.5,287.2 L199.0,287.5 L200.5,287.5 L202.0,287.1 L203.5,286.6 L205.0,286.0 L206.5,285.6 L208.0,285.5 L209.5,285.8 L211.0,286.2 L212.5,286.8 L214.0,287.2 L215.5,287.6 L217.0,287.9 L218.5,288.3 L220.0,288.5 L221.5,288.7 L223.0,288.7 L224.5,288.2 L226.0,287.2 L227.5,285.9 L229.0,284.6 L230.5,283.4 L232.0,282.0 L233.5,280.4 L235.0,278.8 L236.5,277.3 L238.0,276.0 L239.5,275.0 L241.0,274.3 L242.5,273.7 L244.0,273.1 L245.5,272.7 L247.0,272.5 L248.5,272.7 L250.0,273.7 L251.5,275.2 L253.0,276.9 L254.5,278.5 L256.0,279.9 L257.5,281.2 L259.0,282.6 L260.5,284.0 L262.0,285.3 L263.5,286.5 L265.0,287.5 L266.5,288.4 L268.0,289.2 L269.5,290.0 L271.0,290.7 L272.5,291.4 L274.0,292.1 L275.5,292.8 L277.0,293.5 L278.5,294.3 L280.0,295.1 L281.5,295.9 L283.0,296.8 L284.5,297.6 L286.0,298.4 L287.5,299.1 L289.0,299.7 L290.5,300.1 L292.0,300.6 L293.5,301.0 L295.0,301.4 L296.5,301.7 L298.0,301.9 L299.5,302.0 L301.0,302.0 L302.5,301.7 L304.0,301.3 L305.5,300.8 L307.0,300.2 L308.5,299.6 L310.0,299.0 L311.5,298.4 L313.0,297.9 L314.5,297.6 L316.0,297.4 L317.5,297.2 L319.0,297.0 L320.5,296.8 L322.0,296.7 L323.5,296.5 L325.0,296.4 L326.5,296.3 L328.0,296.3 L329.5,296.3 L331.0,296.2 L332.5,296.2 L334.0,296.2 L335.5,296.2 L337.0,296.2 L338.5,296.2 L340.0,296.2 L341.5,296.2 L343.0,296.2 L344.5,296.2 L346.0,296.2 L347.5,296.2 L349.0,296.2 L350.5,296.2 L352.0,296.2 L353.5,296.2 L355.0,296.2 L356.5,296.5 L358.0,297.0 L359.5,297.8 L361.0,298.8 L362.5,299.8 L364.0,300.7 L365.5,301.5 L367.0,302.3 L368.5,303.1 L370.0,304.0 L371.5,304.8 L373.0,305.6 L374.5,306.3 L376.0,307.0 L377.5,307.5 L379.0,308.0 L380.5,308.4 L382.0,308.8 L383.5,309.2 L385.0,309.5 L386.5,309.9 L388.0,310.2 L389.5,310.4 L391.0,310.7 L392.5,310.9 L394.0,311.2 L395.5,311.4 L397.0,311.6 L398.5,311.7 L400.0,311.8 L401.5,311.5 L403.0,310.7 L404.5,309.7 L406.0,308.8 L407.5,308.0 L409.0,307.5 L410.5,307.0 L412.0,306.6 L413.5,306.2 L415.0,305.7 L416.5,305.3 L418.0,304.8 L419.5,304.4 L421.0,303.9 L422.5,303.4 L424.0,302.9 L425.5,302.4 L427.0,301.8 L428.5,301.2 L430.0,300.5 L431.5,299.7 L433.0,298.9 L434.5,297.9 L436.0,296.8 L437.5,295.7 L439.0,294.5 L440.5,293.3 L442.0,292.0 L443.5,290.5 L445.0,289.0 L446.5,287.4 L448.0,285.8 L449.5,284.3 L451.0,282.8 L452.5,281.3 L454.0,279.8 L455.5,278.3 L457.0,276.8 L458.5,275.3 L460.0,273.8 L461.5,272.1 L463.0,270.4 L464.5,268.6 L466.0,266.8 L467.5,265.1 L469.0,263.5 L470.5,262.0 L472.0,260.4 L473.5,258.8 L475.0,257.5 L476.5,256.8 L478.0,256.8 L479.5,256.8 L481.0,256.8 L482.5,256.8 L484.0,256.8 L485.5,256.7 L487.0,256.2 L488.5,255.2 L490.0,254.0 L491.5,252.8 L493.0,251.6 L494.5,250.5 L496.0,249.2 L497.5,248.0 L499.0,246.9 L500.5,246.0 L502.0,245.1 L503.5,244.2 L505.0,243.5 L506.5,243.1 L508.0,243.0 L509.5,243.0 L511.0,243.0 L512.5,243.0 L514.0,243.0 L515.5,243.0 L517.0,243.1 L518.5,243.4 L520.0,243.7 L521.5,244.0 L523.0,244.3 L524.5,244.5 L526.0,244.6 L527.5,244.6 L529.0,244.7 L530.5,244.7 L532.0,244.7 L533.5,244.8 L535.0,244.8 L536.5,244.9 L538.0,244.9 L539.5,245.0 L541.0,245.1 L542.5,245.2 L544.0,245.4 L545.5,245.6 L547.0,246.0 L548.5,247.0 L550.0,248.2 L551.5,249.4 L553.0,250.2 L554.5,250.8 L556.0,251.3 L557.5,251.8 L559.0,252.2 L560.5,252.6 L562.0,253.1 L563.5,253.6 L565.0,254.1 L566.5,254.7 L568.0,255.2 L569.5,255.8 L571.0,256.4 L572.5,257.0 L574.0,257.6 L575.5,258.3 L577.0,259.0 L578.5,259.7 L580.0,260.5 L581.5,261.4 L583.0,262.4 L584.5,263.7 L586.0,265.2 L587.5,266.8 L589.0,268.2 L590.5,269.4 L592.0,270.4 L593.5,271.4 L595.0,272.4 L596.5,273.2 L598.0,273.9 L599.5,274.4 L601.0,274.7 L602.5,275.0 L604.0,275.2 L605.5,275.5 L607.0,275.7 L608.5,275.9 L610.0,276.0 L611.5,276.1 L613.0,276.2 L614.5,276.2 L616.0,276.2 L617.5,276.2 L619.0,276.2 L620.5,276.2 L622.0,276.1 L623.5,276.1 L625.0,276.0 L626.5,276.0 L628.0,275.9 L629.5,275.9 L631.0,275.9 L632.5,275.8 L634.0,275.8 L635.5,275.8 L637.0,275.8 L638.5,276.0 L640.0,277.3 L641.5,279.3 L643.0,281.4 L644.5,283.3 L646.0,284.6 L647.5,285.9 L649.0,287.0 L650.5,288.1 L652.0,289.2 L653.5,290.2 L655.0,291.2 L656.5,292.2 L658.0,293.2 L659.5,294.2 L661.0,295.1 L662.5,296.0 L664.0,296.9 L665.5,297.7 L667.0,298.5 L668.5,299.2 L670.0,299.9 L671.5,300.4 L673.0,301.0 L674.5,301.6 L676.0,302.1 L677.5,302.7 L679.0,303.3 L680.5,304.0 L682.0,304.7 L683.5,305.3 L685.0,306.1 L686.5,306.8 L688.0,307.7 L689.5,308.7 L691.0,309.8 L692.5,311.2 L694.0,312.9 L695.5,314.7 L697.0,316.5 L698.5,318.3 L700.0,320.0 L701.5,321.6 L703.0,323.1 L704.5,324.6 L706.0,326.0 L707.5,327.5 L709.0,329.0 L710.5,330.5 L712.0,332.0 L713.5,333.6 L715.0,335.1 L716.5,336.7 L718.0,338.1 L719.5,339.6 L721.0,340.9 L722.5,342.2 L724.0,343.5 L725.5,344.8 L727.0,346.0 L728.5,347.1 L730.0,348.0 L731.5,348.8 L733.0,349.6 L734.5,350.2 L736.0,350.9 L737.5,351.5 L739.0,352.1 L740.5,352.7 L742.0,353.3 L743.5,353.8 L745.0,354.4 L746.5,354.9 L748.0,355.4 L749.5,356.0 L751.0,356.7 L752.5,357.5 L754.0,358.4 L755.5,359.3 L757.0,360.1 L758.5,360.8 L760.0,361.2 L761.5,361.6 L763.0,362.0 L764.5,362.2 L766.0,362.4 L767.5,362.5 L769.0,362.3 L770.5,361.9 L772.0,361.3 L773.5,360.6 L775.0,360.0 L776.5,359.2 L778.0,358.2 L779.5,357.3 L781.0,356.5 L782.5,356.2 L784.0,356.4 L785.5,357.0 L787.0,357.7 L788.5,358.6 L790.0,359.5 L791.5,360.7 L793.0,362.2 L794.5,363.9 L796.0,365.7 L797.5,367.5 L799.0,369.4 L800.5,371.5 L802.0,373.5 L803.5,375.2 L805.0,376.2 L806.5,376.8 L808.0,377.3 L809.5,377.7 L811.0,378.0 L812.5,378.2 L814.0,378.4 L815.5,378.5 L817.0,378.7 L818.5,378.7 L820.0,378.8 L821.5,378.6 L823.0,378.3 L824.5,377.7 L826.0,377.2 L827.5,376.6 L829.0,376.0 L830.5,375.6 L832.0,375.2 L833.5,374.8 L835.0,374.4 L836.5,374.1 L838.0,373.9 L839.5,373.8 L841.0,373.8 L842.5,373.9 L844.0,374.1 L845.5,374.4 L847.0,374.6 L848.5,374.8 L850.0,375.0 L851.5,375.1 L853.0,375.2 L854.5,375.3 L856.0,375.4 L857.5,375.5 L859.0,375.6 L860.5,375.7 L862.0,375.7 L863.5,375.7 L865.0,375.8 L866.5,375.8 L868.0,375.8 L869.5,375.8 L871.0,375.8 L872.5,375.8 L874.0,375.8 L875.5,375.8 L877.0,375.9 L878.5,376.1 L880.0,376.4 L881.5,376.6 L883.0,376.9 L884.5,377.0 L886.0,377.0 L887.5,376.9 L889.0,376.8 L890.5,376.6 L892.0,376.3 L893.5,376.0 L895.0,375.8 L896.5,375.2 L898.0,374.4 L899.5,373.3 L901.0,372.4 L902.5,371.6 L904.0,371.2 L905.5,371.0 L907.0,370.8 L908.5,370.7 L910.0,370.6 L911.5,370.5 L912.8,370.5" fill="none" stroke="#6f62a6" stroke-width="1.85" stroke-linejoin="round"/>
<path d="M-2.0,143.0 L-0.5,142.6 L1.0,142.3 L2.5,141.9 L4.0,141.5 L5.5,141.2 L7.0,140.8 L8.5,140.5 L10.0,140.2 L11.5,139.8 L13.0,139.5 L14.5,139.1 L16.0,138.8 L17.5,138.4 L19.0,138.0 L20.5,137.6 L22.0,137.2 L23.5,136.9 L25.0,136.5 L26.5,136.2 L28.0,135.9 L29.5,135.6 L31.0,135.3 L32.5,135.1 L34.0,134.8 L35.5,134.6 L37.0,134.3 L38.5,134.1 L40.0,133.9 L41.5,133.7 L43.0,133.6 L44.5,133.5 L46.0,133.5 L47.5,133.5 L49.0,133.6 L50.5,133.7 L52.0,133.8 L53.5,133.9 L55.0,134.1 L56.5,134.3 L58.0,134.4 L59.5,134.6 L61.0,134.8 L62.5,135.0 L64.0,135.2 L65.5,135.4 L67.0,135.6 L68.5,135.9 L70.0,136.1 L71.5,136.4 L73.0,136.7 L74.5,137.0 L76.0,137.2 L77.5,137.5 L79.0,137.8 L80.5,138.1 L82.0,138.4 L83.5,138.6 L85.0,138.9 L86.5,139.2 L88.0,139.5 L89.5,139.8 L91.0,140.0 L92.5,140.3 L94.0,140.6 L95.5,141.0 L97.0,141.3 L98.5,141.6 L100.0,142.0 L101.5,142.4 L103.0,142.8 L104.5,143.3 L106.0,143.8 L107.5,144.3 L109.0,144.8 L110.5,145.3 L112.0,145.8 L113.5,146.3 L115.0,146.8 L116.5,147.2 L118.0,147.6 L119.5,148.0 L121.0,148.4 L122.5,148.8 L124.0,149.2 L125.5,149.5 L127.0,149.9 L128.5,150.2 L130.0,150.6 L131.5,151.0 L133.0,151.3 L134.5,151.7 L136.0,152.1 L137.5,152.5 L139.0,152.9 L140.5,153.3 L142.0,153.8 L143.5,154.2 L145.0,154.6 L146.5,155.1 L148.0,155.5 L149.5,156.0 L151.0,156.5 L152.5,157.0 L154.0,157.6 L155.5,158.2 L157.0,158.8 L158.5,159.5 L160.0,160.2 L161.5,160.9 L163.0,161.7 L164.5,162.5 L166.0,163.4 L167.5,164.3 L169.0,165.2 L170.5,166.2 L172.0,167.2 L173.5,168.2 L175.0,169.3 L176.5,170.6 L178.0,171.8 L179.5,173.2 L181.0,174.6 L182.5,176.0 L184.0,177.5 L185.5,179.0 L187.0,180.5 L188.5,182.0 L190.0,183.6 L191.5,185.3 L193.0,187.1 L194.5,188.8 L196.0,190.6 L197.5,192.3 L199.0,193.9 L200.5,195.5 L202.0,197.1 L203.5,198.6 L205.0,200.1 L206.5,201.6 L208.0,203.1 L209.5,204.5 L211.0,205.9 L212.5,207.2 L214.0,208.5 L215.5,209.7 L217.0,210.9 L218.5,212.0 L220.0,213.2 L221.5,214.2 L223.0,215.3 L224.5,216.3 L226.0,217.3 L227.5,218.2 L229.0,219.1 L230.5,220.0 L232.0,220.7 L233.5,221.4 L235.0,222.1 L236.5,222.8 L238.0,223.5 L239.5,224.2 L241.0,225.1 L242.5,226.0 L244.0,227.1 L245.5,228.1 L247.0,229.2 L248.5,230.3 L250.0,231.4 L251.5,232.4 L253.0,233.3 L254.5,234.2 L256.0,235.1 L257.5,236.0 L259.0,236.9 L260.5,237.7 L262.0,238.5 L263.5,239.3 L265.0,240.0 L266.5,240.7 L268.0,241.4 L269.5,242.0 L271.0,242.7 L272.5,243.3 L274.0,243.9 L275.5,244.4 L277.0,245.0 L278.5,245.6 L280.0,246.1 L281.5,246.7 L283.0,247.3 L284.5,247.8 L286.0,248.4 L287.5,249.0 L289.0,249.6 L290.5,250.2 L292.0,250.8 L293.5,251.5 L295.0,252.2 L296.5,252.9 L298.0,253.5 L299.5,254.2 L301.0,254.8 L302.5,255.4 L304.0,255.9 L305.5,256.4 L307.0,256.9 L308.5,257.3 L310.0,257.8 L311.5,258.2 L313.0,258.6 L314.5,259.0 L316.0,259.3 L317.5,259.6 L319.0,259.9 L320.5,260.1 L322.0,260.3 L323.5,260.5 L325.0,260.6 L326.5,260.8 L328.0,261.0 L329.5,261.2 L331.0,261.3 L332.5,261.4 L334.0,261.5 L335.5,261.6 L337.0,261.7 L338.5,261.7 L340.0,261.8 L341.5,261.7 L343.0,261.7 L344.5,261.7 L346.0,261.7 L347.5,261.6 L349.0,261.6 L350.5,261.5 L352.0,261.4 L353.5,261.3 L355.0,261.2 L356.5,261.1 L358.0,260.9 L359.5,260.5 L361.0,260.2 L362.5,259.7 L364.0,259.3 L365.5,258.8 L367.0,258.3 L368.5,257.9 L370.0,257.5 L371.5,257.1 L373.0,256.7 L374.5,256.4 L376.0,256.0 L377.5,255.6 L379.0,255.2 L380.5,254.8 L382.0,254.5 L383.5,254.1 L385.0,253.8 L386.5,253.4 L388.0,253.1 L389.5,252.8 L391.0,252.5 L392.5,252.3 L394.0,252.0 L395.5,251.7 L397.0,251.3 L398.5,250.9 L400.0,250.5 L401.5,250.0 L403.0,249.3 L404.5,248.6 L406.0,247.8 L407.5,247.0 L409.0,246.1 L410.5,245.2 L412.0,244.3 L413.5,243.4 L415.0,242.5 L416.5,241.7 L418.0,240.8 L419.5,239.9 L421.0,239.0 L422.5,238.1 L424.0,237.2 L425.5,236.3 L427.0,235.4 L428.5,234.6 L430.0,233.8 L431.5,232.9 L433.0,232.2 L434.5,231.4 L436.0,230.6 L437.5,229.8 L439.0,229.1 L440.5,228.4 L442.0,227.6 L443.5,226.9 L445.0,226.2 L446.5,225.6 L448.0,224.9 L449.5,224.2 L451.0,223.5 L452.5,222.9 L454.0,222.2 L455.5,221.6 L457.0,221.0 L458.5,220.5 L460.0,220.0 L461.5,219.5 L463.0,219.1 L464.5,218.7 L466.0,218.2 L467.5,217.9 L469.0,217.5 L470.5,217.1 L472.0,216.8 L473.5,216.5 L475.0,216.2 L476.5,216.0 L478.0,215.8 L479.5,215.6 L481.0,215.4 L482.5,215.2 L484.0,215.1 L485.5,214.9 L487.0,214.8 L488.5,214.6 L490.0,214.4 L491.5,214.2 L493.0,214.0 L494.5,213.8 L496.0,213.6 L497.5,213.3 L499.0,212.9 L500.5,212.5 L502.0,212.1 L503.5,211.7 L505.0,211.4 L506.5,211.1 L508.0,210.9 L509.5,210.8 L511.0,210.8 L512.5,210.8 L514.0,210.9 L515.5,210.9 L517.0,211.0 L518.5,211.2 L520.0,211.3 L521.5,211.4 L523.0,211.6 L524.5,211.7 L526.0,211.8 L527.5,212.0 L529.0,212.2 L530.5,212.4 L532.0,212.6 L533.5,212.8 L535.0,213.1 L536.5,213.3 L538.0,213.5 L539.5,213.7 L541.0,213.9 L542.5,214.0 L544.0,214.2 L545.5,214.3 L547.0,214.5 L548.5,214.6 L550.0,214.8 L551.5,215.0 L553.0,215.2 L554.5,215.4 L556.0,215.7 L557.5,216.0 L559.0,216.5 L560.5,216.9 L562.0,217.5 L563.5,218.0 L565.0,218.6 L566.5,219.2 L568.0,219.8 L569.5,220.3 L571.0,220.9 L572.5,221.4 L574.0,222.0 L575.5,222.6 L577.0,223.2 L578.5,223.8 L580.0,224.4 L581.5,224.9 L583.0,225.5 L584.5,226.1 L586.0,226.6 L587.5,227.1 L589.0,227.7 L590.5,228.2 L592.0,228.7 L593.5,229.2 L595.0,229.7 L596.5,230.2 L598.0,230.6 L599.5,231.1 L601.0,231.6 L602.5,232.1 L604.0,232.6 L605.5,233.1 L607.0,233.7 L608.5,234.1 L610.0,234.6 L611.5,235.0 L613.0,235.3 L614.5,235.5 L616.0,235.6 L617.5,235.6 L619.0,235.7 L620.5,235.8 L622.0,235.8 L623.5,235.8 L625.0,235.9 L626.5,235.9 L628.0,235.9 L629.5,236.0 L631.0,236.0 L632.5,236.1 L634.0,236.2 L635.5,236.3 L637.0,236.5 L638.5,236.8 L640.0,237.2 L641.5,237.6 L643.0,238.1 L644.5,238.6 L646.0,239.1 L647.5,239.6 L649.0,240.2 L650.5,240.8 L652.0,241.4 L653.5,242.1 L655.0,242.8 L656.5,243.5 L658.0,244.1 L659.5,244.8 L661.0,245.4 L662.5,246.0 L664.0,246.6 L665.5,247.3 L667.0,247.9 L668.5,248.5 L670.0,249.1 L671.5,249.7 L673.0,250.4 L674.5,251.0 L676.0,251.7 L677.5,252.4 L679.0,253.1 L680.5,253.8 L682.0,254.5 L683.5,255.2 L685.0,255.9 L686.5,256.7 L688.0,257.4 L689.5,258.2 L691.0,259.0 L692.5,259.9 L694.0,260.7 L695.5,261.6 L697.0,262.5 L698.5,263.4 L700.0,264.4 L701.5,265.3 L703.0,266.2 L704.5,267.2 L706.0,268.1 L707.5,269.1 L709.0,270.2 L710.5,271.2 L712.0,272.3 L713.5,273.4 L715.0,274.4 L716.5,275.4 L718.0,276.3 L719.5,277.2 L721.0,278.0 L722.5,278.9 L724.0,279.7 L725.5,280.4 L727.0,281.2 L728.5,281.9 L730.0,282.6 L731.5,283.2 L733.0,283.8 L734.5,284.3 L736.0,284.8 L737.5,285.2 L739.0,285.6 L740.5,285.9 L742.0,286.2 L743.5,286.5 L745.0,286.8 L746.5,287.1 L748.0,287.5 L749.5,287.8 L751.0,288.3 L752.5,288.8 L754.0,289.3 L755.5,290.0 L757.0,290.8 L758.5,291.6 L760.0,292.5 L761.5,293.5 L763.0,294.5 L764.5,295.5 L766.0,296.5 L767.5,297.5 L769.0,298.5 L770.5,299.6 L772.0,300.8 L773.5,301.9 L775.0,303.1 L776.5,304.3 L778.0,305.5 L779.5,306.6 L781.0,307.7 L782.5,308.8 L784.0,309.7 L785.5,310.7 L787.0,311.6 L788.5,312.5 L790.0,313.3 L791.5,314.2 L793.0,315.0 L794.5,315.9 L796.0,316.7 L797.5,317.5 L799.0,318.3 L800.5,319.1 L802.0,319.9 L803.5,320.6 L805.0,321.4 L806.5,322.1 L808.0,322.8 L809.5,323.6 L811.0,324.3 L812.5,325.0 L814.0,325.7 L815.5,326.5 L817.0,327.2 L818.5,327.9 L820.0,328.7 L821.5,329.4 L823.0,330.1 L824.5,330.8 L826.0,331.4 L827.5,332.0 L829.0,332.6 L830.5,333.1 L832.0,333.7 L833.5,334.2 L835.0,334.7 L836.5,335.2 L838.0,335.6 L839.5,336.1 L841.0,336.5 L842.5,337.0 L844.0,337.4 L845.5,337.8 L847.0,338.3 L848.5,338.6 L850.0,339.0 L851.5,339.3 L853.0,339.6 L854.5,339.8 L856.0,340.1 L857.5,340.3 L859.0,340.5 L860.5,340.7 L862.0,340.9 L863.5,341.1 L865.0,341.2 L866.5,341.4 L868.0,341.6 L869.5,341.8 L871.0,341.9 L872.5,342.0 L874.0,342.2 L875.5,342.4 L877.0,342.6 L878.5,342.8 L880.0,343.0 L881.5,343.3 L883.0,343.7 L884.5,344.1 L886.0,344.6 L887.5,345.0 L889.0,345.5 L890.5,345.9 L892.0,346.3 L893.5,346.6 L895.0,347.0 L896.5,347.4 L898.0,347.7 L899.5,348.1 L901.0,348.4 L902.5,348.8 L904.0,349.1 L905.5,349.4 L907.0,349.7 L908.5,349.9 L910.0,350.2 L911.5,350.5 L912.8,350.7" fill="none" stroke="#c6d3d3" stroke-width="1.85" stroke-linejoin="round"/>
<rect x="4" y="145.0" width="1" height="25.0" fill="#e2dc22"/>
<rect x="2" y="145.0" width="5" height="19.5" fill="#e2dc22"/>
<rect x="12" y="113.8" width="1" height="35.8" fill="#e2dc22"/>
<rect x="10" y="118.0" width="5" height="30.0" fill="#e2dc22"/>
<rect x="19" y="108.8" width="1" height="27.0" fill="#ea4a6e"/>
<rect x="17" y="115.0" width="5" height="17.0" fill="#ea4a6e"/>
<rect x="27" y="104.5" width="1" height="28.0" fill="#e2dc22"/>
<rect x="25" y="107.0" width="5" height="24.2" fill="#e2dc22"/>
<rect x="35" y="90.0" width="1" height="30.0" fill="#ea4a6e"/>
<rect x="33" y="105.0" width="5" height="10.5" fill="#ea4a6e"/>
<rect x="42" y="90.0" width="1" height="33.8" fill="#e2dc22"/>
<rect x="40" y="95.0" width="5" height="16.8" fill="#e2dc22"/>
<rect x="50" y="86.2" width="1" height="19.5" fill="#ea4a6e"/>
<rect x="48" y="96.2" width="5" height="1.2" fill="#ea4a6e"/>
<rect x="57" y="92.5" width="1" height="15.0" fill="#ea4a6e"/>
<rect x="55" y="95.0" width="5" height="4.2" fill="#ea4a6e"/>
<rect x="65" y="90.0" width="1" height="45.0" fill="#ea4a6e"/>
<rect x="63" y="97.0" width="5" height="36.0" fill="#ea4a6e"/>
<rect x="73" y="125.0" width="1" height="32.5" fill="#ea4a6e"/>
<rect x="71" y="132.0" width="5" height="18.8" fill="#ea4a6e"/>
<rect x="80" y="134.2" width="1" height="34.5" fill="#e2dc22"/>
<rect x="78" y="137.5" width="5" height="13.2" fill="#e2dc22"/>
<rect x="88" y="133.8" width="1" height="15.8" fill="#ea4a6e"/>
<rect x="86" y="140.0" width="5" height="1.2" fill="#ea4a6e"/>
<rect x="96" y="144.5" width="1" height="27.2" fill="#ea4a6e"/>
<rect x="94" y="165.8" width="5" height="5.0" fill="#ea4a6e"/>
<rect x="103" y="166.2" width="1" height="17.0" fill="#ea4a6e"/>
<rect x="101" y="170.0" width="5" height="7.5" fill="#ea4a6e"/>
<rect x="111" y="177.5" width="1" height="42.5" fill="#ea4a6e"/>
<rect x="109" y="178.8" width="5" height="35.2" fill="#ea4a6e"/>
<rect x="118" y="207.0" width="1" height="40.5" fill="#ea4a6e"/>
<rect x="116" y="213.8" width="5" height="7.5" fill="#ea4a6e"/>
<rect x="126" y="212.5" width="1" height="39.5" fill="#ea4a6e"/>
<rect x="124" y="223.0" width="5" height="12.5" fill="#ea4a6e"/>
<rect x="134" y="211.0" width="1" height="26.0" fill="#e2dc22"/>
<rect x="132" y="212.5" width="5" height="19.5" fill="#e2dc22"/>
<rect x="141" y="207.5" width="1" height="12.0" fill="#e2dc22"/>
<rect x="139" y="209.5" width="5" height="4.2" fill="#e2dc22"/>
<rect x="149" y="206.0" width="1" height="21.5" fill="#ea4a6e"/>
<rect x="147" y="213.0" width="5" height="8.8" fill="#ea4a6e"/>
<rect x="157" y="194.5" width="1" height="21.2" fill="#e2dc22"/>
<rect x="155" y="196.0" width="5" height="17.8" fill="#e2dc22"/>
<rect x="164" y="192.0" width="1" height="20.0" fill="#ea4a6e"/>
<rect x="162" y="202.0" width="5" height="10.0" fill="#ea4a6e"/>
<rect x="172" y="206.0" width="1" height="31.5" fill="#ea4a6e"/>
<rect x="170" y="208.8" width="5" height="24.2" fill="#ea4a6e"/>
<rect x="179" y="216.0" width="1" height="42.8" fill="#ea4a6e"/>
<rect x="177" y="218.8" width="5" height="37.0" fill="#ea4a6e"/>
<rect x="187" y="241.0" width="1" height="24.0" fill="#e2dc22"/>
<rect x="185" y="248.0" width="5" height="5.8" fill="#e2dc22"/>
<rect x="195" y="232.0" width="1" height="31.8" fill="#ea4a6e"/>
<rect x="193" y="232.0" width="5" height="22.5" fill="#ea4a6e"/>
<rect x="202" y="236.0" width="1" height="27.8" fill="#e2dc22"/>
<rect x="200" y="247.5" width="5" height="1.2" fill="#e2dc22"/>
<rect x="210" y="240.0" width="1" height="18.0" fill="#ea4a6e"/>
<rect x="208" y="244.5" width="5" height="7.2" fill="#ea4a6e"/>
<rect x="218" y="250.8" width="1" height="24.8" fill="#ea4a6e"/>
<rect x="216" y="250.8" width="5" height="12.2" fill="#ea4a6e"/>
<rect x="225" y="240.0" width="1" height="26.8" fill="#e2dc22"/>
<rect x="223" y="242.5" width="5" height="20.5" fill="#e2dc22"/>
<rect x="233" y="212.0" width="1" height="17.5" fill="#e2dc22"/>
<rect x="231" y="220.5" width="5" height="5.0" fill="#e2dc22"/>
<rect x="240" y="219.5" width="1" height="15.5" fill="#ea4a6e"/>
<rect x="238" y="222.0" width="5" height="12.5" fill="#ea4a6e"/>
<rect x="248" y="230.0" width="1" height="27.0" fill="#ea4a6e"/>
<rect x="246" y="232.5" width="5" height="16.2" fill="#ea4a6e"/>
<rect x="256" y="265.0" width="1" height="22.5" fill="#ea4a6e"/>
<rect x="254" y="270.0" width="5" height="14.5" fill="#ea4a6e"/>
<rect x="263" y="278.0" width="1" height="21.5" fill="#e2dc22"/>
<rect x="261" y="283.0" width="5" height="4.5" fill="#e2dc22"/>
<rect x="271" y="270.0" width="1" height="15.5" fill="#e2dc22"/>
<rect x="269" y="277.0" width="5" height="3.8" fill="#e2dc22"/>
<rect x="279" y="266.8" width="1" height="17.8" fill="#e2dc22"/>
<rect x="277" y="268.8" width="5" height="12.0" fill="#e2dc22"/>
<rect x="286" y="265.8" width="1" height="22.2" fill="#ea4a6e"/>
<rect x="284" y="269.5" width="5" height="11.8" fill="#ea4a6e"/>
<rect x="294" y="280.8" width="1" height="14.8" fill="#ea4a6e"/>
<rect x="292" y="282.5" width="5" height="1.2" fill="#ea4a6e"/>
<rect x="301" y="272.0" width="1" height="18.5" fill="#e2dc22"/>
<rect x="299" y="277.5" width="5" height="8.0" fill="#e2dc22"/>
<rect x="309" y="270.8" width="1" height="9.2" fill="#e2dc22"/>
<rect x="307" y="276.2" width="5" height="2.5" fill="#e2dc22"/>
<rect x="317" y="263.2" width="1" height="20.5" fill="#e2dc22"/>
<rect x="315" y="265.8" width="5" height="15.5" fill="#e2dc22"/>
<rect x="324" y="257.0" width="1" height="13.5" fill="#e2dc22"/>
<rect x="322" y="260.8" width="5" height="3.8" fill="#e2dc22"/>
<rect x="332" y="238.0" width="1" height="20.8" fill="#e2dc22"/>
<rect x="330" y="248.0" width="5" height="8.2" fill="#e2dc22"/>
<rect x="340" y="243.0" width="1" height="23.2" fill="#ea4a6e"/>
<rect x="338" y="246.8" width="5" height="14.0" fill="#ea4a6e"/>
<rect x="347" y="247.0" width="1" height="16.8" fill="#e2dc22"/>
<rect x="345" y="255.0" width="5" height="7.5" fill="#e2dc22"/>
<rect x="355" y="237.0" width="1" height="20.5" fill="#e2dc22"/>
<rect x="353" y="240.8" width="5" height="16.0" fill="#e2dc22"/>
<rect x="362" y="213.2" width="1" height="28.0" fill="#e2dc22"/>
<rect x="360" y="220.8" width="5" height="20.5" fill="#e2dc22"/>
<rect x="370" y="198.0" width="1" height="25.8" fill="#e2dc22"/>
<rect x="368" y="203.0" width="5" height="17.0" fill="#e2dc22"/>
<rect x="378" y="181.2" width="1" height="16.8" fill="#e2dc22"/>
<rect x="376" y="193.8" width="5" height="3.8" fill="#e2dc22"/>
<rect x="385" y="189.2" width="1" height="23.2" fill="#ea4a6e"/>
<rect x="383" y="196.2" width="5" height="15.5" fill="#ea4a6e"/>
<rect x="393" y="195.0" width="1" height="19.5" fill="#e2dc22"/>
<rect x="391" y="203.0" width="5" height="9.5" fill="#e2dc22"/>
<rect x="401" y="210.0" width="1" height="19.5" fill="#ea4a6e"/>
<rect x="399" y="212.5" width="5" height="15.0" fill="#ea4a6e"/>
<rect x="408" y="211.8" width="1" height="12.0" fill="#ea4a6e"/>
<rect x="406" y="214.5" width="5" height="7.2" fill="#ea4a6e"/>
<rect x="416" y="183.0" width="1" height="37.5" fill="#e2dc22"/>
<rect x="414" y="187.0" width="5" height="33.5" fill="#e2dc22"/>
<rect x="423" y="185.0" width="1" height="13.8" fill="#ea4a6e"/>
<rect x="421" y="192.5" width="5" height="1.2" fill="#ea4a6e"/>
<rect x="431" y="178.0" width="1" height="12.8" fill="#d6e02c"/>
<rect x="429" y="189.2" width="5" height="1.5" fill="#d6e02c"/>
<rect x="439" y="196.2" width="1" height="16.2" fill="#ea4a6e"/>
<rect x="437" y="200.8" width="5" height="10.0" fill="#ea4a6e"/>
<rect x="446" y="195.0" width="1" height="21.2" fill="#e2dc22"/>
<rect x="444" y="209.2" width="5" height="2.5" fill="#e2dc22"/>
<rect x="454" y="197.0" width="1" height="16.2" fill="#e2dc22"/>
<rect x="452" y="198.8" width="5" height="13.0" fill="#e2dc22"/>
<rect x="462" y="200.0" width="1" height="25.5" fill="#ea4a6e"/>
<rect x="460" y="201.2" width="5" height="18.2" fill="#ea4a6e"/>
<rect x="469" y="208.0" width="1" height="15.2" fill="#e2dc22"/>
<rect x="467" y="211.2" width="5" height="6.2" fill="#e2dc22"/>
<rect x="477" y="213.2" width="1" height="12.2" fill="#ea4a6e"/>
<rect x="475" y="214.5" width="5" height="11.0" fill="#ea4a6e"/>
<rect x="484" y="220.0" width="1" height="34.5" fill="#ea4a6e"/>
<rect x="482" y="223.0" width="5" height="29.8" fill="#ea4a6e"/>
<rect x="492" y="235.5" width="1" height="19.5" fill="#e2dc22"/>
<rect x="490" y="237.8" width="5" height="14.2" fill="#e2dc22"/>
<rect x="500" y="223.0" width="1" height="23.2" fill="#e2dc22"/>
<rect x="498" y="225.0" width="5" height="16.2" fill="#e2dc22"/>
<rect x="507" y="193.8" width="1" height="34.2" fill="#e2dc22"/>
<rect x="505" y="197.0" width="5" height="29.2" fill="#e2dc22"/>
<rect x="515" y="188.8" width="1" height="33.8" fill="#ea4a6e"/>
<rect x="513" y="192.0" width="5" height="30.5" fill="#ea4a6e"/>
<rect x="523" y="217.0" width="1" height="18.0" fill="#ea4a6e"/>
<rect x="521" y="220.0" width="5" height="4.5" fill="#ea4a6e"/>
<rect x="530" y="212.5" width="1" height="18.0" fill="#ea4a6e"/>
<rect x="528" y="221.2" width="5" height="3.2" fill="#ea4a6e"/>
<rect x="538" y="210.0" width="1" height="13.8" fill="#e2dc22"/>
<rect x="536" y="214.5" width="5" height="9.2" fill="#e2dc22"/>
<rect x="545" y="203.8" width="1" height="16.8" fill="#e2dc22"/>
<rect x="543" y="206.2" width="5" height="6.8" fill="#e2dc22"/>
<rect x="553" y="222.0" width="1" height="28.0" fill="#ea4a6e"/>
<rect x="551" y="224.5" width="5" height="24.2" fill="#ea4a6e"/>
<rect x="561" y="231.2" width="1" height="21.2" fill="#e2dc22"/>
<rect x="559" y="236.2" width="5" height="8.2" fill="#e2dc22"/>
<rect x="568" y="228.8" width="1" height="19.5" fill="#e2dc22"/>
<rect x="566" y="238.8" width="5" height="6.8" fill="#e2dc22"/>
<rect x="576" y="235.8" width="1" height="11.8" fill="#ea4a6e"/>
<rect x="574" y="238.8" width="5" height="8.0" fill="#ea4a6e"/>
<rect x="584" y="245.8" width="1" height="17.2" fill="#ea4a6e"/>
<rect x="582" y="250.0" width="5" height="10.8" fill="#ea4a6e"/>
<rect x="591" y="250.0" width="1" height="24.5" fill="#ea4a6e"/>
<rect x="589" y="260.0" width="5" height="12.5" fill="#ea4a6e"/>
<rect x="599" y="263.8" width="1" height="10.8" fill="#e2dc22"/>
<rect x="597" y="270.0" width="5" height="2.5" fill="#e2dc22"/>
<rect x="606" y="255.8" width="1" height="13.0" fill="#e2dc22"/>
<rect x="604" y="258.8" width="5" height="8.2" fill="#e2dc22"/>
<rect x="614" y="234.2" width="1" height="18.8" fill="#e2dc22"/>
<rect x="612" y="237.5" width="5" height="14.2" fill="#e2dc22"/>
<rect x="622" y="212.5" width="1" height="11.2" fill="#e2dc22"/>
<rect x="620" y="215.8" width="5" height="3.0" fill="#e2dc22"/>
<rect x="629" y="214.5" width="1" height="17.2" fill="#ea4a6e"/>
<rect x="627" y="217.0" width="5" height="8.0" fill="#ea4a6e"/>
<rect x="637" y="228.8" width="1" height="28.0" fill="#ea4a6e"/>
<rect x="635" y="228.8" width="5" height="28.0" fill="#ea4a6e"/>
<rect x="645" y="263.0" width="1" height="25.2" fill="#ea4a6e"/>
<rect x="643" y="270.0" width="5" height="15.0" fill="#ea4a6e"/>
<rect x="652" y="265.0" width="1" height="22.0" fill="#e2dc22"/>
<rect x="650" y="279.2" width="5" height="5.8" fill="#e2dc22"/>
<rect x="660" y="273.0" width="1" height="30.8" fill="#ea4a6e"/>
<rect x="658" y="282.0" width="5" height="11.0" fill="#ea4a6e"/>
<rect x="667" y="268.8" width="1" height="33.0" fill="#e2dc22"/>
<rect x="665" y="280.5" width="5" height="20.8" fill="#e2dc22"/>
<rect x="675" y="275.8" width="1" height="13.0" fill="#e2dc22"/>
<rect x="673" y="278.8" width="5" height="5.0" fill="#e2dc22"/>
<rect x="683" y="277.0" width="1" height="20.5" fill="#ea4a6e"/>
<rect x="681" y="277.0" width="5" height="10.5" fill="#ea4a6e"/>
<rect x="690" y="286.2" width="1" height="20.8" fill="#ea4a6e"/>
<rect x="688" y="288.8" width="5" height="12.0" fill="#ea4a6e"/>
<rect x="698" y="308.8" width="1" height="12.5" fill="#ea4a6e"/>
<rect x="696" y="313.8" width="5" height="5.0" fill="#ea4a6e"/>
<rect x="706" y="305.8" width="1" height="14.2" fill="#ea4a6e"/>
<rect x="704" y="314.5" width="5" height="5.5" fill="#ea4a6e"/>
<rect x="713" y="308.8" width="1" height="19.2" fill="#ea4a6e"/>
<rect x="711" y="315.8" width="5" height="11.0" fill="#ea4a6e"/>
<rect x="721" y="327.5" width="1" height="13.2" fill="#ea4a6e"/>
<rect x="719" y="327.5" width="5" height="12.0" fill="#ea4a6e"/>
<rect x="728" y="326.2" width="1" height="22.5" fill="#e2dc22"/>
<rect x="726" y="327.5" width="5" height="12.5" fill="#e2dc22"/>
<rect x="736" y="310.0" width="1" height="23.8" fill="#e2dc22"/>
<rect x="734" y="313.8" width="5" height="15.0" fill="#e2dc22"/>
<rect x="744" y="310.0" width="1" height="10.0" fill="#ea4a6e"/>
<rect x="742" y="313.8" width="5" height="4.2" fill="#ea4a6e"/>
<rect x="751" y="290.8" width="1" height="24.2" fill="#d6e02c"/>
<rect x="749" y="310.0" width="5" height="2.5" fill="#d6e02c"/>
<rect x="759" y="313.8" width="1" height="19.2" fill="#ea4a6e"/>
<rect x="757" y="314.5" width="5" height="15.0" fill="#ea4a6e"/>
<rect x="767" y="322.0" width="1" height="14.2" fill="#ea4a6e"/>
<rect x="765" y="324.5" width="5" height="9.8" fill="#ea4a6e"/>
<rect x="774" y="331.2" width="1" height="13.8" fill="#ea4a6e"/>
<rect x="772" y="332.5" width="5" height="7.5" fill="#ea4a6e"/>
<rect x="782" y="326.2" width="1" height="28.8" fill="#ea4a6e"/>
<rect x="780" y="330.5" width="5" height="15.8" fill="#ea4a6e"/>
<rect x="789" y="353.8" width="1" height="15.8" fill="#ea4a6e"/>
<rect x="787" y="355.0" width="5" height="4.5" fill="#ea4a6e"/>
<rect x="797" y="351.8" width="1" height="14.5" fill="#ea4a6e"/>
<rect x="795" y="356.2" width="5" height="8.0" fill="#ea4a6e"/>
<rect x="805" y="362.0" width="1" height="15.5" fill="#ea4a6e"/>
<rect x="803" y="363.2" width="5" height="13.0" fill="#ea4a6e"/>
<rect x="812" y="359.5" width="1" height="22.5" fill="#e2dc22"/>
<rect x="810" y="360.8" width="5" height="16.2" fill="#e2dc22"/>
<rect x="820" y="349.5" width="1" height="22.5" fill="#e2dc22"/>
<rect x="818" y="357.5" width="5" height="4.5" fill="#e2dc22"/>
<rect x="828" y="333.8" width="1" height="17.5" fill="#e2dc22"/>
<rect x="826" y="342.5" width="5" height="3.8" fill="#e2dc22"/>
<rect x="835" y="322.0" width="1" height="19.8" fill="#e2dc22"/>
<rect x="833" y="336.2" width="5" height="3.8" fill="#e2dc22"/>
<rect x="843" y="326.8" width="1" height="26.2" fill="#ea4a6e"/>
<rect x="841" y="332.5" width="5" height="16.8" fill="#ea4a6e"/>
<rect x="850" y="347.5" width="1" height="15.5" fill="#ea4a6e"/>
<rect x="848" y="351.8" width="5" height="7.5" fill="#ea4a6e"/>
<rect x="858" y="342.0" width="1" height="11.0" fill="#e2dc22"/>
<rect x="856" y="344.5" width="5" height="8.0" fill="#e2dc22"/>
<rect x="866" y="332.5" width="1" height="16.2" fill="#e2dc22"/>
<rect x="864" y="339.5" width="5" height="7.5" fill="#e2dc22"/>
<rect x="873" y="333.8" width="1" height="12.0" fill="#ea4a6e"/>
<rect x="871" y="338.8" width="5" height="3.8" fill="#ea4a6e"/>
<rect x="881" y="338.8" width="1" height="22.5" fill="#ea4a6e"/>
<rect x="879" y="340.0" width="5" height="18.0" fill="#ea4a6e"/>
<rect x="889" y="348.0" width="1" height="10.8" fill="#e2dc22"/>
<rect x="887" y="353.8" width="5" height="3.2" fill="#e2dc22"/>
<rect x="896" y="353.8" width="1" height="12.0" fill="#e2dc22"/>
<rect x="894" y="353.8" width="5" height="1.2" fill="#e2dc22"/>
<rect x="904" y="347.0" width="1" height="15.0" fill="#e2dc22"/>
<rect x="902" y="348.0" width="5" height="10.0" fill="#e2dc22"/>
<rect x="911" y="339.0" width="1" height="12.0" fill="#e2dc22"/>
<rect x="909" y="341.0" width="5" height="7.5" fill="#e2dc22"/>
<rect x="3" y="522.5" width="2" height="28.0" fill="#4fc3f7"/>
<rect x="11" y="522.5" width="2" height="17.3" fill="#4fc3f7"/>
<rect x="18" y="522.5" width="2" height="12.3" fill="#4fc3f7"/>
<rect x="26" y="522.5" width="2" height="5.0" fill="#4fc3f7"/>
<rect x="34" y="522.5" width="2" height="2.3" fill="#4fc3f7"/>
<rect x="41" y="518.2" width="2" height="4.3" fill="#e8407a"/>
<rect x="49" y="515.8" width="2" height="6.7" fill="#e8407a"/>
<rect x="56" y="516.2" width="2" height="6.3" fill="#e8407a"/>
<rect x="64" y="522.5" width="2" height="2.3" fill="#26a69a"/>
<rect x="72" y="522.5" width="2" height="11.3" fill="#26a69a"/>
<rect x="79" y="522.5" width="2" height="14.6" fill="#26a69a"/>
<rect x="87" y="522.5" width="2" height="17.3" fill="#26a69a"/>
<rect x="95" y="522.5" width="2" height="24.0" fill="#26a69a"/>
<rect x="102" y="522.5" width="2" height="29.0" fill="#26a69a"/>
<rect x="110" y="522.5" width="2" height="39.0" fill="#26a69a"/>
<rect x="117" y="522.5" width="2" height="45.6" fill="#26a69a"/>
<rect x="125" y="522.5" width="2" height="49.0" fill="#26a69a"/>
<rect x="133" y="522.5" width="2" height="44.0" fill="#4fc3f7"/>
<rect x="140" y="522.5" width="2" height="40.0" fill="#4fc3f7"/>
<rect x="148" y="522.5" width="2" height="34.0" fill="#4fc3f7"/>
<rect x="156" y="522.5" width="2" height="25.6" fill="#4fc3f7"/>
<rect x="163" y="522.5" width="2" height="22.3" fill="#4fc3f7"/>
<rect x="171" y="522.5" width="2" height="23.3" fill="#4fc3f7"/>
<rect x="178" y="522.5" width="2" height="26.6" fill="#26a69a"/>
<rect x="186" y="522.5" width="2" height="25.0" fill="#4fc3f7"/>
<rect x="194" y="522.5" width="2" height="23.3" fill="#4fc3f7"/>
<rect x="201" y="522.5" width="2" height="20.0" fill="#4fc3f7"/>
<rect x="209" y="522.5" width="2" height="17.3" fill="#4fc3f7"/>
<rect x="217" y="522.5" width="2" height="15.6" fill="#4fc3f7"/>
<rect x="224" y="522.5" width="2" height="10.0" fill="#4fc3f7"/>
<rect x="232" y="521.8" width="2" height="1.0" fill="#c9c2c4"/>
<rect x="239" y="518.2" width="2" height="4.3" fill="#e8407a"/>
<rect x="247" y="518.2" width="2" height="4.3" fill="#e8407a"/>
<rect x="255" y="522.5" width="2" height="3.3" fill="#26a69a"/>
<rect x="262" y="522.5" width="2" height="6.7" fill="#26a69a"/>
<rect x="270" y="522.5" width="2" height="6.7" fill="#26a69a"/>
<rect x="278" y="522.5" width="2" height="4.7" fill="#4fc3f7"/>
<rect x="285" y="522.5" width="2" height="4.0" fill="#4fc3f7"/>
<rect x="293" y="522.5" width="2" height="4.0" fill="#4fc3f7"/>
<rect x="300" y="522.5" width="2" height="1.3" fill="#4fc3f7"/>
<rect x="308" y="521.2" width="2" height="1.3" fill="#e8407a"/>
<rect x="316" y="517.2" width="2" height="5.3" fill="#e8407a"/>
<rect x="323" y="513.2" width="2" height="9.3" fill="#e8407a"/>
<rect x="331" y="507.2" width="2" height="15.3" fill="#e8407a"/>
<rect x="339" y="505.9" width="2" height="16.6" fill="#e8407a"/>
<rect x="346" y="504.9" width="2" height="17.6" fill="#e8407a"/>
<rect x="354" y="501.5" width="2" height="21.0" fill="#e8407a"/>
<rect x="361" y="495.9" width="2" height="26.6" fill="#e8407a"/>
<rect x="369" y="489.9" width="2" height="32.6" fill="#e8407a"/>
<rect x="377" y="485.9" width="2" height="36.6" fill="#e8407a"/>
<rect x="384" y="488.2" width="2" height="34.3" fill="#c9c2c4"/>
<rect x="392" y="489.9" width="2" height="32.6" fill="#c9c2c4"/>
<rect x="400" y="493.9" width="2" height="28.6" fill="#c9c2c4"/>
<rect x="407" y="498.2" width="2" height="24.3" fill="#c9c2c4"/>
<rect x="415" y="497.5" width="2" height="25.0" fill="#e8407a"/>
<rect x="422" y="498.9" width="2" height="23.6" fill="#c9c2c4"/>
<rect x="430" y="499.9" width="2" height="22.6" fill="#c9c2c4"/>
<rect x="438" y="506.5" width="2" height="16.0" fill="#c9c2c4"/>
<rect x="445" y="510.9" width="2" height="11.6" fill="#c9c2c4"/>
<rect x="453" y="513.2" width="2" height="9.3" fill="#c9c2c4"/>
<rect x="461" y="518.8" width="2" height="3.7" fill="#c9c2c4"/>
<rect x="468" y="521.8" width="2" height="1.0" fill="#c9c2c4"/>
<rect x="476" y="522.5" width="2" height="4.0" fill="#26a69a"/>
<rect x="483" y="522.5" width="2" height="13.3" fill="#26a69a"/>
<rect x="491" y="522.5" width="2" height="15.0" fill="#26a69a"/>
<rect x="499" y="522.5" width="2" height="13.3" fill="#4fc3f7"/>
<rect x="506" y="522.5" width="2" height="6.7" fill="#4fc3f7"/>
<rect x="514" y="522.5" width="2" height="6.3" fill="#26a69a"/>
<rect x="522" y="522.5" width="2" height="6.7" fill="#26a69a"/>
<rect x="529" y="522.5" width="2" height="6.7" fill="#26a69a"/>
<rect x="537" y="522.5" width="2" height="4.7" fill="#4fc3f7"/>
<rect x="544" y="522.5" width="2" height="1.7" fill="#4fc3f7"/>
<rect x="552" y="522.5" width="2" height="8.3" fill="#26a69a"/>
<rect x="560" y="522.5" width="2" height="11.3" fill="#26a69a"/>
<rect x="567" y="522.5" width="2" height="11.3" fill="#26a69a"/>
<rect x="575" y="522.5" width="2" height="12.3" fill="#26a69a"/>
<rect x="583" y="522.5" width="2" height="15.6" fill="#26a69a"/>
<rect x="590" y="522.5" width="2" height="19.6" fill="#26a69a"/>
<rect x="598" y="522.5" width="2" height="20.0" fill="#26a69a"/>
<rect x="605" y="522.5" width="2" height="17.3" fill="#4fc3f7"/>
<rect x="613" y="522.5" width="2" height="9.6" fill="#4fc3f7"/>
<rect x="621" y="521.8" width="2" height="1.0" fill="#e8407a"/>
<rect x="628" y="517.2" width="2" height="5.3" fill="#e8407a"/>
<rect x="636" y="521.2" width="2" height="1.3" fill="#c9c2c4"/>
<rect x="644" y="522.5" width="2" height="7.3" fill="#26a69a"/>
<rect x="651" y="522.5" width="2" height="12.3" fill="#26a69a"/>
<rect x="659" y="522.5" width="2" height="15.6" fill="#26a69a"/>
<rect x="666" y="522.5" width="2" height="14.0" fill="#4fc3f7"/>
<rect x="674" y="522.5" width="2" height="12.3" fill="#4fc3f7"/>
<rect x="682" y="522.5" width="2" height="12.3" fill="#4fc3f7"/>
<rect x="689" y="522.5" width="2" height="14.0" fill="#26a69a"/>
<rect x="697" y="522.5" width="2" height="17.3" fill="#26a69a"/>
<rect x="705" y="522.5" width="2" height="18.0" fill="#26a69a"/>
<rect x="712" y="522.5" width="2" height="18.0" fill="#26a69a"/>
<rect x="720" y="522.5" width="2" height="20.6" fill="#26a69a"/>
<rect x="727" y="522.5" width="2" height="18.0" fill="#4fc3f7"/>
<rect x="735" y="522.5" width="2" height="12.3" fill="#4fc3f7"/>
<rect x="743" y="522.5" width="2" height="7.3" fill="#4fc3f7"/>
<rect x="750" y="522.5" width="2" height="2.3" fill="#4fc3f7"/>
<rect x="758" y="522.5" width="2" height="2.3" fill="#26a69a"/>
<rect x="766" y="522.5" width="2" height="2.7" fill="#26a69a"/>
<rect x="773" y="522.5" width="2" height="3.3" fill="#26a69a"/>
<rect x="781" y="522.5" width="2" height="4.7" fill="#26a69a"/>
<rect x="788" y="522.5" width="2" height="6.7" fill="#26a69a"/>
<rect x="796" y="522.5" width="2" height="8.0" fill="#26a69a"/>
<rect x="804" y="522.5" width="2" height="10.0" fill="#26a69a"/>
<rect x="811" y="522.5" width="2" height="8.0" fill="#4fc3f7"/>
<rect x="819" y="522.5" width="2" height="5.0" fill="#4fc3f7"/>
<rect x="827" y="519.8" width="2" height="2.7" fill="#e8407a"/>
<rect x="834" y="514.8" width="2" height="7.7" fill="#e8407a"/>
<rect x="842" y="513.2" width="2" height="9.3" fill="#e8407a"/>
<rect x="849" y="513.8" width="2" height="8.7" fill="#c9c2c4"/>
<rect x="857" y="512.2" width="2" height="10.3" fill="#e8407a"/>
<rect x="865" y="508.9" width="2" height="13.6" fill="#e8407a"/>
<rect x="872" y="508.2" width="2" height="14.3" fill="#e8407a"/>
<rect x="880" y="510.9" width="2" height="11.6" fill="#c9c2c4"/>
<rect x="888" y="511.9" width="2" height="10.6" fill="#c9c2c4"/>
<rect x="895" y="513.2" width="2" height="9.3" fill="#c9c2c4"/>
<rect x="903" y="511.9" width="2" height="10.6" fill="#e8407a"/>
<rect x="910" y="509.9" width="2" height="12.6" fill="#e8407a"/>
<path d="M-2.0,444.6 L-0.5,445.6 L1.0,446.6 L2.5,447.8 L4.0,449.0 L5.5,450.2 L7.0,451.3 L8.5,452.4 L10.0,453.3 L11.5,454.1 L13.0,454.9 L14.5,455.7 L16.0,456.3 L17.5,456.9 L19.0,457.4 L20.5,457.7 L22.0,457.9 L23.5,458.1 L25.0,458.3 L26.5,458.5 L28.0,458.7 L29.5,458.8 L31.0,458.9 L32.5,458.9 L34.0,458.9 L35.5,458.8 L37.0,458.6 L38.5,458.3 L40.0,458.0 L41.5,457.7 L43.0,457.3 L44.5,457.0 L46.0,456.7 L47.5,456.4 L49.0,456.1 L50.5,455.7 L52.0,455.4 L53.5,455.1 L55.0,454.8 L56.5,454.5 L58.0,454.3 L59.5,454.3 L61.0,454.3 L62.5,454.4 L64.0,454.7 L65.5,455.0 L67.0,455.3 L68.5,455.7 L70.0,456.2 L71.5,456.6 L73.0,457.0 L74.5,457.5 L76.0,458.1 L77.5,458.7 L79.0,459.4 L80.5,460.1 L82.0,460.9 L83.5,461.8 L85.0,462.7 L86.5,463.8 L88.0,465.0 L89.5,466.2 L91.0,467.6 L92.5,469.0 L94.0,470.4 L95.5,471.9 L97.0,473.4 L98.5,475.0 L100.0,476.7 L101.5,478.5 L103.0,480.4 L104.5,482.3 L106.0,484.2 L107.5,486.3 L109.0,488.5 L110.5,490.9 L112.0,493.3 L113.5,495.8 L115.0,498.3 L116.5,500.7 L118.0,503.0 L119.5,505.3 L121.0,507.5 L122.5,509.7 L124.0,511.9 L125.5,514.1 L127.0,516.2 L128.5,518.2 L130.0,520.1 L131.5,521.9 L133.0,523.7 L134.5,525.5 L136.0,527.1 L137.5,528.8 L139.0,530.3 L140.5,531.9 L142.0,533.4 L143.5,534.8 L145.0,536.1 L146.5,537.5 L148.0,538.8 L149.5,540.0 L151.0,541.3 L152.5,542.6 L154.0,543.9 L155.5,545.2 L157.0,546.5 L158.5,547.7 L160.0,549.0 L161.5,550.3 L163.0,551.5 L164.5,552.8 L166.0,554.1 L167.5,555.4 L169.0,556.7 L170.5,558.0 L172.0,559.3 L173.5,560.6 L175.0,561.9 L176.5,563.2 L178.0,564.5 L179.5,565.8 L181.0,567.1 L182.5,568.3 L184.0,569.6 L185.5,570.8 L187.0,572.0 L188.5,573.2 L190.0,574.4 L191.5,575.5 L193.0,576.7 L194.5,577.8 L196.0,578.9 L197.5,579.9 L199.0,580.9 L200.5,581.9 L202.0,582.9 L203.5,583.9 L205.0,584.8 L206.5,585.8 L208.0,586.6 L209.5,587.5 L211.0,588.2 L212.5,588.8 L214.0,589.4 L215.5,590.0 L217.0,590.5 L218.5,591.0 L220.0,591.5 L221.5,591.9 L223.0,592.1 L224.5,592.3 L226.0,592.3 L227.5,592.2 L229.0,592.1 L230.5,592.0 L232.0,591.8 L233.5,591.6 L235.0,591.4 L236.5,591.2 L238.0,590.9 L239.5,590.7 L241.0,590.5 L242.5,590.3 L244.0,590.0 L245.5,589.8 L247.0,589.7 L248.5,589.7 L250.0,589.7 L251.5,589.9 L253.0,590.2 L254.5,590.5 L256.0,590.8 L257.5,591.1 L259.0,591.5 L260.5,591.8 L262.0,592.1 L263.5,592.4 L265.0,592.6 L266.5,592.9 L268.0,593.1 L269.5,593.3 L271.0,593.6 L272.5,593.8 L274.0,594.0 L275.5,594.2 L277.0,594.4 L278.5,594.6 L280.0,594.8 L281.5,595.0 L283.0,595.2 L284.5,595.4 L286.0,595.6 L287.5,595.7 L289.0,595.9 L290.5,596.0 L292.0,596.2 L293.5,596.3 L295.0,596.4 L296.5,596.5 L298.0,596.6 L299.5,596.7 L301.0,596.8 L302.5,596.9 L304.0,596.9 L305.5,597.0 L307.0,596.9 L308.5,596.8 L310.0,596.5 L311.5,596.1 L313.0,595.7 L314.5,595.3 L316.0,594.8 L317.5,594.4 L319.0,594.0 L320.5,593.5 L322.0,593.0 L323.5,592.5 L325.0,592.0 L326.5,591.4 L328.0,590.7 L329.5,590.0 L331.0,589.2 L332.5,588.4 L334.0,587.6 L335.5,586.8 L337.0,585.9 L338.5,585.0 L340.0,584.1 L341.5,583.1 L343.0,582.1 L344.5,581.1 L346.0,580.1 L347.5,579.0 L349.0,578.0 L350.5,576.9 L352.0,575.7 L353.5,574.5 L355.0,573.3 L356.5,572.1 L358.0,570.8 L359.5,569.4 L361.0,568.0 L362.5,566.4 L364.0,564.8 L365.5,563.1 L367.0,561.3 L368.5,559.6 L370.0,557.9 L371.5,556.3 L373.0,554.7 L374.5,553.0 L376.0,551.4 L377.5,549.8 L379.0,548.1 L380.5,546.4 L382.0,544.8 L383.5,543.1 L385.0,541.6 L386.5,540.2 L388.0,538.8 L389.5,537.4 L391.0,536.1 L392.5,534.9 L394.0,533.6 L395.5,532.3 L397.0,531.0 L398.5,529.7 L400.0,528.4 L401.5,527.1 L403.0,525.8 L404.5,524.5 L406.0,523.2 L407.5,522.0 L409.0,520.8 L410.5,519.6 L412.0,518.4 L413.5,517.2 L415.0,516.0 L416.5,514.9 L418.0,513.8 L419.5,512.7 L421.0,511.6 L422.5,510.5 L424.0,509.4 L425.5,508.4 L427.0,507.4 L428.5,506.4 L430.0,505.5 L431.5,504.6 L433.0,503.8 L434.5,503.0 L436.0,502.2 L437.5,501.5 L439.0,500.8 L440.5,500.2 L442.0,499.6 L443.5,499.0 L445.0,498.4 L446.5,497.9 L448.0,497.4 L449.5,496.9 L451.0,496.4 L452.5,496.1 L454.0,495.8 L455.5,495.6 L457.0,495.5 L458.5,495.3 L460.0,495.2 L461.5,495.0 L463.0,494.9 L464.5,494.9 L466.0,494.8 L467.5,494.9 L469.0,495.0 L470.5,495.2 L472.0,495.5 L473.5,495.8 L475.0,496.1 L476.5,496.5 L478.0,496.9 L479.5,497.4 L481.0,498.0 L482.5,498.7 L484.0,499.4 L485.5,500.1 L487.0,500.8 L488.5,501.5 L490.0,502.2 L491.5,503.0 L493.0,503.8 L494.5,504.5 L496.0,505.2 L497.5,505.8 L499.0,506.3 L500.5,506.7 L502.0,507.0 L503.5,507.3 L505.0,507.5 L506.5,507.8 L508.0,508.0 L509.5,508.2 L511.0,508.5 L512.5,508.7 L514.0,509.0 L515.5,509.3 L517.0,509.7 L518.5,510.0 L520.0,510.3 L521.5,510.7 L523.0,511.0 L524.5,511.2 L526.0,511.4 L527.5,511.6 L529.0,511.8 L530.5,512.0 L532.0,512.1 L533.5,512.3 L535.0,512.4 L536.5,512.4 L538.0,512.5 L539.5,512.5 L541.0,512.5 L542.5,512.5 L544.0,512.5 L545.5,512.5 L547.0,512.6 L548.5,512.9 L550.0,513.3 L551.5,513.9 L553.0,514.5 L554.5,515.2 L556.0,515.7 L557.5,516.2 L559.0,516.8 L560.5,517.3 L562.0,517.9 L563.5,518.5 L565.0,519.1 L566.5,519.7 L568.0,520.4 L569.5,521.0 L571.0,521.7 L572.5,522.4 L574.0,523.2 L575.5,523.9 L577.0,524.7 L578.5,525.5 L580.0,526.3 L581.5,527.1 L583.0,527.9 L584.5,528.6 L586.0,529.4 L587.5,530.3 L589.0,531.1 L590.5,531.9 L592.0,532.8 L593.5,533.6 L595.0,534.4 L596.5,535.2 L598.0,536.0 L599.5,536.8 L601.0,537.6 L602.5,538.4 L604.0,539.2 L605.5,540.0 L607.0,540.6 L608.5,541.2 L610.0,541.5 L611.5,541.9 L613.0,542.2 L614.5,542.5 L616.0,542.8 L617.5,542.9 L619.0,543.1 L620.5,543.1 L622.0,542.9 L623.5,542.6 L625.0,542.2 L626.5,541.8 L628.0,541.3 L629.5,540.9 L631.0,540.6 L632.5,540.4 L634.0,540.4 L635.5,540.5 L637.0,540.7 L638.5,540.9 L640.0,541.2 L641.5,541.6 L643.0,541.9 L644.5,542.3 L646.0,542.7 L647.5,543.2 L649.0,543.9 L650.5,544.6 L652.0,545.4 L653.5,546.2 L655.0,547.0 L656.5,547.9 L658.0,548.7 L659.5,549.4 L661.0,550.0 L662.5,550.7 L664.0,551.3 L665.5,551.9 L667.0,552.5 L668.5,553.0 L670.0,553.6 L671.5,554.2 L673.0,554.7 L674.5,555.3 L676.0,555.9 L677.5,556.4 L679.0,557.0 L680.5,557.5 L682.0,558.0 L683.5,558.5 L685.0,559.0 L686.5,559.6 L688.0,560.1 L689.5,560.8 L691.0,561.4 L692.5,562.2 L694.0,563.0 L695.5,563.9 L697.0,564.8 L698.5,565.7 L700.0,566.7 L701.5,567.7 L703.0,568.7 L704.5,569.6 L706.0,570.6 L707.5,571.5 L709.0,572.5 L710.5,573.5 L712.0,574.5 L713.5,575.5 L715.0,576.5 L716.5,577.4 L718.0,578.4 L719.5,579.2 L721.0,580.1 L722.5,580.9 L724.0,581.7 L725.5,582.6 L727.0,583.4 L728.5,584.2 L730.0,584.9 L731.5,585.6 L733.0,586.3 L734.5,586.8 L736.0,587.2 L737.5,587.4 L739.0,587.7 L740.5,587.9 L742.0,588.1 L743.5,588.3 L745.0,588.4 L746.5,588.6 L748.0,588.7 L749.5,588.8 L751.0,588.9 L752.5,589.0 L754.0,589.1 L755.5,589.2 L757.0,589.2 L758.5,589.3 L760.0,589.3 L761.5,589.4 L763.0,589.4 L764.5,589.5 L766.0,589.6 L767.5,589.7 L769.0,589.8 L770.5,589.9 L772.0,590.0 L773.5,590.2 L775.0,590.4 L776.5,590.5 L778.0,590.7 L779.5,590.9 L781.0,591.1 L782.5,591.3 L784.0,591.6 L785.5,591.8 L787.0,592.1 L788.5,592.5 L790.0,592.8 L791.5,593.2 L793.0,593.5 L794.5,593.9 L796.0,594.2 L797.5,594.6 L799.0,595.0 L800.5,595.4 L802.0,595.9 L803.5,596.4 L805.0,596.9 L806.5,597.4 L808.0,597.8 L809.5,598.1 L811.0,598.4 L812.5,598.6 L814.0,598.7 L815.5,598.8 L817.0,598.8 L818.5,598.9 L820.0,598.9 L821.5,599.0 L823.0,599.0 L824.5,598.9 L826.0,598.7 L827.5,598.5 L829.0,598.2 L830.5,597.8 L832.0,597.4 L833.5,597.0 L835.0,596.6 L836.5,596.2 L838.0,595.9 L839.5,595.5 L841.0,595.2 L842.5,594.8 L844.0,594.4 L845.5,594.0 L847.0,593.6 L848.5,593.1 L850.0,592.7 L851.5,592.2 L853.0,591.7 L854.5,591.1 L856.0,590.6 L857.5,589.9 L859.0,589.3 L860.5,588.7 L862.0,588.0 L863.5,587.4 L865.0,586.8 L866.5,586.2 L868.0,585.6 L869.5,585.1 L871.0,584.5 L872.5,583.9 L874.0,583.4 L875.5,582.8 L877.0,582.3 L878.5,581.7 L880.0,581.2 L881.5,580.7 L883.0,580.1 L884.5,579.7 L886.0,579.2 L887.5,578.7 L889.0,578.2 L890.5,577.8 L892.0,577.3 L893.5,576.8 L895.0,576.3 L896.5,575.8 L898.0,575.2 L899.5,574.7 L901.0,574.1 L902.5,573.6 L904.0,573.0 L905.5,572.4 L907.0,571.8 L908.5,571.2 L910.0,570.6 L911.5,569.9 L912.1,569.7" fill="none" stroke="#1f9e78" stroke-width="1.9" stroke-linejoin="round"/>
<path d="M-2.0,478.9 L-0.5,478.4 L1.0,477.9 L2.5,477.4 L4.0,477.0 L5.5,476.2 L7.0,475.0 L8.5,473.4 L10.0,472.0 L11.5,470.9 L13.0,470.4 L14.5,470.1 L16.0,469.8 L17.5,469.5 L19.0,468.9 L20.5,468.0 L22.0,466.8 L23.5,465.5 L25.0,464.3 L26.5,463.3 L28.0,462.6 L29.5,462.0 L31.0,461.5 L32.5,461.0 L34.0,460.4 L35.5,459.6 L37.0,458.5 L38.5,457.2 L40.0,455.8 L41.5,454.5 L43.0,453.4 L44.5,452.5 L46.0,451.7 L47.5,451.0 L49.0,450.3 L50.5,449.7 L52.0,449.0 L53.5,448.4 L55.0,447.9 L56.5,447.6 L58.0,447.8 L59.5,448.9 L61.0,450.7 L62.5,453.0 L64.0,455.3 L65.5,457.5 L67.0,460.0 L68.5,462.7 L70.0,465.3 L71.5,467.2 L73.0,468.5 L74.5,469.6 L76.0,470.6 L77.5,471.5 L79.0,472.6 L80.5,473.8 L82.0,475.0 L83.5,476.3 L85.0,477.8 L86.5,479.4 L88.0,481.2 L89.5,483.4 L91.0,485.9 L92.5,488.6 L94.0,491.3 L95.5,493.7 L97.0,495.9 L98.5,498.1 L100.0,500.2 L101.5,502.6 L103.0,505.2 L104.5,508.3 L106.0,511.8 L107.5,515.6 L109.0,519.4 L110.5,523.2 L112.0,527.1 L113.5,531.1 L115.0,535.2 L116.5,539.1 L118.0,542.8 L119.5,546.5 L121.0,550.2 L122.5,553.8 L124.0,556.9 L125.5,559.4 L127.0,561.2 L128.5,562.6 L130.0,563.9 L131.5,565.0 L133.0,566.1 L134.5,567.1 L136.0,568.0 L137.5,568.8 L139.0,569.6 L140.5,570.4 L142.0,571.2 L143.5,572.3 L145.0,573.3 L146.5,574.1 L148.0,574.6 L149.5,574.6 L151.0,574.3 L152.5,573.9 L154.0,573.4 L155.5,573.1 L157.0,573.0 L158.5,573.3 L160.0,573.7 L161.5,574.3 L163.0,574.9 L164.5,575.6 L166.0,576.5 L167.5,577.6 L169.0,578.9 L170.5,580.3 L172.0,581.6 L173.5,583.2 L175.0,584.9 L176.5,586.7 L178.0,588.3 L179.5,589.8 L181.0,591.1 L182.5,592.4 L184.0,593.6 L185.5,594.7 L187.0,595.7 L188.5,596.6 L190.0,597.5 L191.5,598.3 L193.0,599.0 L194.5,599.6 L196.0,600.0 L197.5,600.4 L199.0,600.7 L200.5,601.0 L202.0,601.2 L203.5,601.5 L205.0,601.6 L206.5,601.8 L208.0,602.0 L209.5,602.2 L211.0,602.6 L212.5,603.2 L214.0,603.9 L215.5,604.5 L217.0,604.9 L218.5,604.9 L220.0,604.4 L221.5,603.7 L223.0,602.8 L224.5,601.8 L226.0,600.7 L227.5,599.2 L229.0,597.4 L230.5,595.6 L232.0,593.9 L233.5,592.4 L235.0,590.9 L236.5,589.4 L238.0,588.2 L239.5,587.2 L241.0,586.8 L242.5,586.4 L244.0,586.0 L245.5,585.8 L247.0,585.7 L248.5,585.7 L250.0,586.6 L251.5,588.0 L253.0,589.7 L254.5,591.3 L256.0,592.8 L257.5,594.2 L259.0,595.7 L260.5,597.1 L262.0,598.3 L263.5,599.1 L265.0,599.8 L266.5,600.4 L268.0,600.9 L269.5,601.2 L271.0,601.3 L272.5,601.1 L274.0,600.7 L275.5,600.2 L277.0,599.8 L278.5,599.6 L280.0,599.6 L281.5,599.6 L283.0,599.6 L284.5,599.6 L286.0,599.6 L287.5,599.6 L289.0,599.6 L290.5,599.6 L292.0,599.6 L293.5,599.6 L295.0,599.5 L296.5,599.2 L298.0,598.6 L299.5,598.0 L301.0,597.4 L302.5,596.9 L304.0,596.3 L305.5,595.7 L307.0,595.0 L308.5,594.3 L310.0,593.5 L311.5,592.6 L313.0,591.6 L314.5,590.6 L316.0,589.5 L317.5,588.4 L319.0,587.1 L320.5,585.7 L322.0,584.3 L323.5,582.8 L325.0,581.3 L326.5,579.5 L328.0,577.7 L329.5,576.0 L331.0,574.5 L332.5,573.4 L334.0,572.4 L335.5,571.6 L337.0,570.7 L338.5,569.9 L340.0,569.0 L341.5,568.0 L343.0,567.0 L344.5,565.9 L346.0,564.8 L347.5,563.6 L349.0,562.3 L350.5,560.9 L352.0,559.4 L353.5,557.7 L355.0,555.8 L356.5,553.6 L358.0,550.9 L359.5,548.1 L361.0,545.3 L362.5,542.6 L364.0,540.0 L365.5,537.3 L367.0,534.7 L368.5,532.1 L370.0,529.6 L371.5,527.2 L373.0,524.7 L374.5,522.4 L376.0,520.2 L377.5,518.2 L379.0,516.3 L380.5,514.6 L382.0,512.9 L383.5,511.4 L385.0,510.0 L386.5,508.7 L388.0,507.5 L389.5,506.4 L391.0,505.4 L392.5,504.4 L394.0,503.4 L395.5,502.2 L397.0,501.2 L398.5,500.3 L400.0,499.9 L401.5,499.8 L403.0,499.8 L404.5,499.8 L406.0,499.8 L407.5,499.8 L409.0,499.6 L410.5,498.4 L412.0,496.4 L413.5,494.2 L415.0,492.3 L416.5,491.0 L418.0,489.9 L419.5,488.9 L421.0,488.0 L422.5,487.1 L424.0,486.2 L425.5,485.2 L427.0,484.2 L428.5,483.3 L430.0,482.7 L431.5,482.5 L433.0,482.8 L434.5,483.2 L436.0,483.8 L437.5,484.4 L439.0,484.9 L440.5,485.5 L442.0,486.1 L443.5,486.6 L445.0,487.0 L446.5,487.2 L448.0,487.1 L449.5,486.9 L451.0,486.8 L452.5,486.6 L454.0,486.5 L455.5,486.8 L457.0,487.6 L458.5,488.6 L460.0,489.8 L461.5,490.7 L463.0,491.5 L464.5,492.1 L466.0,492.7 L467.5,493.4 L469.0,494.1 L470.5,495.0 L472.0,495.8 L473.5,496.8 L475.0,497.8 L476.5,499.0 L478.0,500.4 L479.5,502.1 L481.0,504.0 L482.5,505.9 L484.0,507.8 L485.5,509.5 L487.0,511.4 L488.5,513.3 L490.0,514.9 L491.5,516.2 L493.0,517.0 L494.5,517.7 L496.0,518.4 L497.5,518.8 L499.0,519.1 L500.5,518.9 L502.0,517.6 L503.5,515.8 L505.0,513.9 L506.5,512.7 L508.0,512.5 L509.5,512.6 L511.0,512.9 L512.5,513.2 L514.0,513.6 L515.5,513.9 L517.0,514.3 L518.5,514.7 L520.0,515.1 L521.5,515.5 L523.0,515.9 L524.5,516.3 L526.0,516.7 L527.5,517.1 L529.0,517.4 L530.5,517.5 L532.0,517.4 L533.5,517.2 L535.0,517.0 L536.5,516.7 L538.0,516.4 L539.5,516.0 L541.0,515.4 L542.5,514.8 L544.0,514.3 L545.5,514.1 L547.0,514.7 L548.5,516.1 L550.0,518.0 L551.5,519.9 L553.0,521.6 L554.5,523.0 L556.0,524.6 L557.5,526.0 L559.0,527.2 L560.5,528.1 L562.0,528.7 L563.5,529.1 L565.0,529.5 L566.5,529.9 L568.0,530.4 L569.5,531.0 L571.0,531.8 L572.5,532.6 L574.0,533.6 L575.5,534.5 L577.0,535.5 L578.5,536.6 L580.0,537.7 L581.5,539.0 L583.0,540.3 L584.5,541.8 L586.0,543.6 L587.5,545.6 L589.0,547.5 L590.5,549.2 L592.0,550.4 L593.5,551.6 L595.0,552.7 L596.5,553.7 L598.0,554.4 L599.5,554.9 L601.0,555.4 L602.5,555.8 L604.0,556.2 L605.5,556.3 L607.0,556.3 L608.5,555.8 L610.0,554.9 L611.5,553.7 L613.0,552.4 L614.5,551.0 L616.0,549.3 L617.5,547.1 L619.0,544.9 L620.5,542.8 L622.0,541.0 L623.5,539.7 L625.0,538.4 L626.5,537.2 L628.0,536.3 L629.5,535.8 L631.0,535.9 L632.5,536.4 L634.0,537.3 L635.5,538.4 L637.0,539.5 L638.5,540.7 L640.0,542.3 L641.5,544.0 L643.0,545.8 L644.5,547.6 L646.0,549.2 L647.5,550.9 L649.0,552.5 L650.5,554.2 L652.0,555.8 L653.5,557.3 L655.0,559.0 L656.5,560.7 L658.0,562.2 L659.5,563.3 L661.0,564.0 L662.5,564.5 L664.0,564.9 L665.5,565.2 L667.0,565.5 L668.5,565.8 L670.0,566.1 L671.5,566.3 L673.0,566.5 L674.5,566.8 L676.0,567.1 L677.5,567.5 L679.0,568.0 L680.5,568.6 L682.0,569.2 L683.5,569.8 L685.0,570.6 L686.5,571.5 L688.0,572.5 L689.5,573.6 L691.0,574.8 L692.5,576.1 L694.0,577.7 L695.5,579.3 L697.0,580.9 L698.5,582.3 L700.0,583.5 L701.5,584.6 L703.0,585.7 L704.5,586.7 L706.0,587.9 L707.5,589.1 L709.0,590.5 L710.5,591.8 L712.0,593.2 L713.5,594.4 L715.0,595.5 L716.5,596.7 L718.0,597.8 L719.5,598.7 L721.0,599.5 L722.5,600.0 L724.0,600.4 L725.5,600.8 L727.0,601.1 L728.5,601.3 L730.0,601.2 L731.5,600.8 L733.0,600.1 L734.5,599.2 L736.0,598.4 L737.5,597.6 L739.0,596.9 L740.5,596.1 L742.0,595.3 L743.5,594.5 L745.0,593.6 L746.5,592.6 L748.0,591.5 L749.5,590.5 L751.0,589.8 L752.5,589.6 L754.0,589.6 L755.5,589.6 L757.0,589.6 L758.5,589.6 L760.0,589.7 L761.5,589.8 L763.0,590.0 L764.5,590.3 L766.0,590.5 L767.5,590.7 L769.0,590.8 L770.5,590.9 L772.0,591.0 L773.5,591.2 L775.0,591.4 L776.5,591.7 L778.0,592.1 L779.5,592.6 L781.0,593.1 L782.5,593.7 L784.0,594.3 L785.5,595.0 L787.0,595.7 L788.5,596.5 L790.0,597.3 L791.5,598.2 L793.0,599.2 L794.5,600.2 L796.0,601.3 L797.5,602.2 L799.0,603.2 L800.5,604.2 L802.0,605.2 L803.5,605.9 L805.0,606.3 L806.5,606.3 L808.0,606.2 L809.5,606.0 L811.0,605.9 L812.5,605.7 L814.0,605.4 L815.5,605.1 L817.0,604.5 L818.5,603.9 L820.0,603.3 L821.5,602.4 L823.0,601.3 L824.5,599.9 L826.0,598.4 L827.5,597.0 L829.0,595.6 L830.5,594.2 L832.0,592.8 L833.5,591.5 L835.0,590.3 L836.5,589.3 L838.0,588.3 L839.5,587.4 L841.0,586.7 L842.5,586.0 L844.0,585.5 L845.5,585.2 L847.0,584.9 L848.5,584.7 L850.0,584.3 L851.5,583.9 L853.0,583.1 L854.5,582.1 L856.0,580.9 L857.5,579.7 L859.0,578.6 L860.5,577.5 L862.0,576.5 L863.5,575.5 L865.0,574.5 L866.5,573.5 L868.0,572.4 L869.5,571.2 L871.0,570.1 L872.5,569.3 L874.0,569.0 L875.5,568.9 L877.0,568.9 L878.5,568.8 L880.0,568.8 L881.5,568.7 L883.0,568.5 L884.5,568.3 L886.0,568.0 L887.5,567.7 L889.0,567.4 L890.5,567.1 L892.0,566.8 L893.5,566.5 L895.0,566.2 L896.5,565.8 L898.0,565.2 L899.5,564.4 L901.0,563.5 L902.5,562.5 L904.0,561.6 L905.5,560.8 L907.0,560.0 L908.5,559.2 L910.0,558.4 L911.5,557.7 L912.1,557.4" fill="none" stroke="#cf5420" stroke-width="1.9" stroke-linejoin="round"/>
<rect x="0" y="415.5" width="1022" height="1.4" fill="#d4d4d4"/>
<rect x="0" y="623.6" width="1022" height="1.3" fill="#cfcfcf"/>
<rect x="943.8" y="2" width="1.5" height="651" fill="#d4d4d4"/>
</svg>
<div class="t " style="left:205.2px;top:8.2px;color:#e0e0e0"><span style="font-size:13px;position:relative;top:0.6px">开</span>=<span style="color:#d6d222">3870</span></div>
<div class="t " style="left:258.4px;top:8.2px;color:#e0e0e0"><span style="font-size:13px;position:relative;top:0.6px">高</span>=<span style="color:#d6d222">3912</span></div>
<div class="t " style="left:311.1px;top:8.2px;color:#e0e0e0"><span style="font-size:13px;position:relative;top:0.6px">低</span>=<span style="color:#d6d222">3851</span></div>
<div class="t " style="left:363.8px;top:8.2px;color:#e0e0e0"><span style="font-size:13px;position:relative;top:0.6px">收</span>=<span style="color:#d6d222">3899</span></div>
<div class="t " style="left:416.7px;top:8.2px;color:#d6d222">31</div>
<div class="t " style="left:433px;top:8.2px;color:#d6d222;letter-spacing:0.15px">(+0.80%)</div>
<div class="box" style="left:4px;top:5.5px;width:226.5px;height:24px;"></div>
<div class="t " style="left:9.4px;top:8.0px;color:#dedede;word-spacing:0.6px">FCPOc3 <span style="position:relative;top:-1px">·</span> 1天 <span style="position:relative;top:-1px">·</span> MDX <span style="position:relative;top:-1px">·</span> Trade Price</div>
<svg style="position:absolute;left:205px;top:13px" width="22" height="10" viewBox="0 0 22 10"><g fill="none" stroke="#d8d8d8" stroke-width="1"><circle cx="5" cy="5" r="1.6"/><circle cx="10.9" cy="5" r="1.6"/><circle cx="16.8" cy="5" r="1.6"/></g></svg>
<div class="box" style="left:9px;top:35px;width:28.5px;height:20.5px;border-radius:3px;border-color:#3e3e3e"></div>
<svg style="position:absolute;left:9px;top:35px" width="28" height="20" viewBox="0 0 28 20"><path d="M16.4,7.5 L12.7,10.95 L16.4,14.4" fill="none" stroke="#e8e8e8" stroke-width="1.5" stroke-linecap="round" stroke-linejoin="round"/></svg>
<div class="t " style="left:9.4px;top:54.8px;color:#d2d2d2">BB 20 2</div>
<div class="t " style="left:60.6px;top:54.8px;color:#ffffff">3,856.3500</div>
<div class="t " style="left:127px;top:54.8px;color:#f6c11a">3,960.7459</div>
<div class="t " style="left:193px;top:54.8px;color:#8561c2">3,751.9541</div>
<div class="t " style="left:9.3px;top:422.9px;color:#d2d2d2">MACD 12 26 close 9 EMA EMA</div>
<div class="t " style="left:187px;top:422.9px;color:#df3f78">18.9269</div>
<div class="t " style="left:235.5px;top:422.9px;color:#ee5a1e">−54.8722</div>
<div class="t " style="left:292px;top:422.9px;color:#1cb383">−73.7991</div>
<div class="box" style="left:860.4px;top:9.3px;width:23.3px;height:23.3px;border-color:#383838;background:#1e1e1e"></div>
<div class="box" style="left:888.4px;top:9.3px;width:23.3px;height:23.3px;border-color:#383838;background:#1e1e1e"></div>
<div class="box" style="left:916.3px;top:9.3px;width:23.3px;height:23.3px;border-color:#383838;background:#1e1e1e"></div>
<svg style="position:absolute;left:860px;top:9px" width="82" height="24" viewBox="860 9 82 24"><g fill="none" stroke="#dedede" stroke-width="1.15" stroke-linecap="round" stroke-linejoin="round">
<path d="M872.4,17.3 V26.4 M868.5,22.6 L872.4,26.6 L876.3,22.6"/>
<path d="M897.4,16.1 L900.6,19.2 L903.8,16.1 M897.4,26.9 L900.6,23.9 L903.8,26.9"/>
<path d="M900.6,19.6 V23.5" stroke-opacity="0.25"/>
<path d="M923.4,20.2 V18.8 Q923.4,16.6 925.6,16.6 H931.6 Q933.8,16.6 933.8,18.8 V20.2 M923.4,23 V24.5 Q923.4,26.7 925.6,26.7 H931.6 Q933.8,26.7 933.8,24.5 V23"/>
</g></svg>
<div class="box" style="left:948px;top:6.2px;width:69.8px;height:49px;border-color:#454545"></div>
<div class="t " style="left:952.4px;top:8.8px;color:#f0f0f0">MYR</div>
<div class="t " style="left:952.4px;top:32.8px;color:#f0f0f0">t</div>
<svg style="position:absolute;left:1006px;top:16px" width="10" height="32" viewBox="1006 16 10 32"><g fill="none" stroke="#e6e6e6" stroke-width="1.4" stroke-linecap="round" stroke-linejoin="round"><path d="M1008.6,18.6 L1010.9,20.7 L1013.2,18.6"/><path d="M1008.6,42.6 L1010.9,44.7 L1013.2,42.6"/></g></svg>
<div class="t " style="left:952.4px;top:72.1px;color:#d0d0d0">5200</div>
<div class="t " style="left:952.4px;top:112.1px;color:#d0d0d0">5000</div>
<div class="t " style="left:952.4px;top:152.1px;color:#d0d0d0">4800</div>
<div class="t " style="left:952.4px;top:192.1px;color:#d0d0d0">4600</div>
<div class="t " style="left:952.4px;top:232.1px;color:#d0d0d0">4400</div>
<div class="t " style="left:952.4px;top:272.1px;color:#d0d0d0">4200</div>
<div class="t " style="left:952.4px;top:390.8px;color:#d0d0d0">3600</div>
<div class="t " style="left:952.4px;top:415.7px;color:#d0d0d0;font-size:11.6px">150.0000</div>
<div class="t " style="left:952.4px;top:447.9px;color:#d0d0d0;font-size:11.6px">100.0000</div>
<div class="t " style="left:952.4px;top:480.2px;color:#d0d0d0;font-size:11.6px">50.0000</div>
<div class="t " style="left:952.4px;top:512.4px;color:#d0d0d0;font-size:11.6px">0.0000</div>
<div class="t " style="left:952.4px;top:576.9px;color:#d0d0d0;font-size:11.6px">−100.0000</div>
<div class="lab" style="top:316px;width:72px;background:#ffc107;color:#222;font-size:11.8px"><span style="display:inline-block;transform:translateY(-0.55px)">3,960.7459</span></div>
<div class="lab" style="top:333px;width:37.8px;background:#cbcb14;color:#222;font-size:11.8px"><span style="display:inline-block;transform:translateY(-0.55px)">3899</span></div>
<div class="lab" style="top:350px;width:72px;background:#ffffff;color:#222;font-size:11.8px"><span style="display:inline-block;transform:translateY(-0.55px)">3,856.3500</span></div>
<div class="lab b" style="top:367px;width:72px;background:#8b64cf;color:#fff;font-size:11.8px"><span style="display:inline-block;transform:translateY(-0.55px)">3,751.9541</span></div>
<div class="lab b" style="top:502.5px;width:54.8px;background:#e63b78;color:#fff;font-size:11.5px">18.9269</div>
<div class="lab b" style="top:550.5px;width:60.5px;background:#f85516;color:#fff;font-size:11.5px">−54.8722</div>
<div class="lab b" style="top:567.5px;width:60.5px;background:#10bd8b;color:#fff;font-size:11.5px">−73.7991</div>
<div class="t b" style="-webkit-text-stroke:0;left:-10.5px;width:60px;text-align:center;top:627.8px;color:#d6d6d6">12<span style="font-weight:500">月</span></div>
<div class="t b" style="-webkit-text-stroke:0;left:149.5px;width:60px;text-align:center;top:627.8px;color:#d6d6d6">2025</div>
<div class="t b" style="-webkit-text-stroke:0;left:302.5px;width:60px;text-align:center;top:627.8px;color:#d6d6d6">2<span style="font-weight:500">月</span></div>
<div class="t b" style="-webkit-text-stroke:0;left:447.5px;width:60px;text-align:center;top:627.8px;color:#d6d6d6">3<span style="font-weight:500">月</span></div>
<div class="t b" style="-webkit-text-stroke:0;left:592.5px;width:60px;text-align:center;top:627.8px;color:#d6d6d6">4<span style="font-weight:500">月</span></div>
<div class="t b" style="-webkit-text-stroke:0;left:752.5px;width:60px;text-align:center;top:627.8px;color:#d6d6d6">5<span style="font-weight:500">月</span></div>
<div class="t b" style="-webkit-text-stroke:0;left:905.5px;width:60px;text-align:center;top:627.8px;color:#a0a0a0">6<span style="font-weight:500">月</span></div>
<svg style="position:absolute;left:978px;top:632px" width="12" height="12" viewBox="0 0 24 24"><g fill="none" stroke="#b0b0b0" stroke-width="2" stroke-linejoin="round"><circle cx="12" cy="12" r="3.6"/><circle cx="12" cy="12" r="9"/></g></svg>
<div style="position:absolute;left:892.5px;top:623.4px;font-size:29.5px;line-height:35px;letter-spacing:3.2px;color:#e9f1ff;white-space:nowrap;transform-origin:0 0;transform:scaleY(1.08)">FX678</div>
<div class="btn" style="left:1px;width:43.3px;">1天</div>
<div class="btn" style="left:45.5px;width:41.5px;">5天</div>
<div class="btn" style="left:88.5px;width:48.5px;">10天</div>
<div class="btn" style="left:138.5px;width:54.5px;">1个月</div>
<div class="btn" style="left:194.5px;width:54.3px;">3个月</div>
<div class="btn" style="left:250px;width:54.3px;background:#3a4df0;color:#fff;">6个月</div>
<div class="btn" style="left:305.5px;width:71.8px;">本年迄今</div>
<div class="btn" style="left:378.5px;width:42.1px;">1年</div>
<div class="btn" style="left:421.8px;width:43.2px;">2年</div>
<div class="btn" style="left:466.4px;width:41.6px;">3年</div>
<div class="btn" style="left:509.4px;width:42.4px;">5年</div>
<div class="btn" style="left:553px;width:49.0px;">10年</div>
<div class="btn" style="left:603.2px;width:48.4px;">20年</div>
<div class="btn" style="left:652.8px;width:59.5px;">最大值</div>
<div class="btn" style="left:715px;width:22.2px;"></div>
<svg style="position:absolute;left:719.8px;top:658.8px" width="12.4" height="12.4" viewBox="0 0 24 24"><g fill="none" stroke="#e0e0e0" stroke-width="1.9" stroke-linejoin="round"><circle cx="12" cy="12" r="3.6"/><path d="M10.3,2.5h3.4l.6,2.6 1.9,.8 2.3-1.4 2.4,2.4-1.4,2.3 .8,1.9 2.6,.6v3.4l-2.6,.6-.8,1.9 1.4,2.3-2.4,2.4-2.3-1.4-1.9,.8-.6,2.6h-3.4l-.6-2.6-1.9-.8-2.3,1.4-2.4-2.4 1.4-2.3-.8-1.9-2.6-.6v-3.4l2.6-.6 .8-1.9-1.4-2.3 2.4-2.4 2.3,1.4 1.9-.8z"/></g></svg>
<div class="box" style="left:753.5px;top:653px;width:198.5px;height:30px;border-radius:2px;border-color:#383838;background:#121212"></div>
<div class="t " style="left:767px;top:654.9px;color:#d0d0d0;font-size:11.7px">28-11月-2024</div>
<div class="t " style="left:843px;top:654.9px;color:#d0d0d0">–</div>
<div class="t " style="left:856.2px;top:654.9px;color:#d0d0d0;font-size:11.6px">28-5月-2025</div>
<svg style="position:absolute;left:929px;top:658px" width="14" height="14" viewBox="0 0 14 14"><g fill="none" stroke="#dcdcdc" stroke-width="1.2" stroke-linejoin="round"><rect x="1.2" y="2.6" width="11.6" height="10" rx="1.2"/><path d="M1.2,5.8H12.8M4.2,1V3.6M9.8,1V3.6"/></g></svg>
</body></html>
